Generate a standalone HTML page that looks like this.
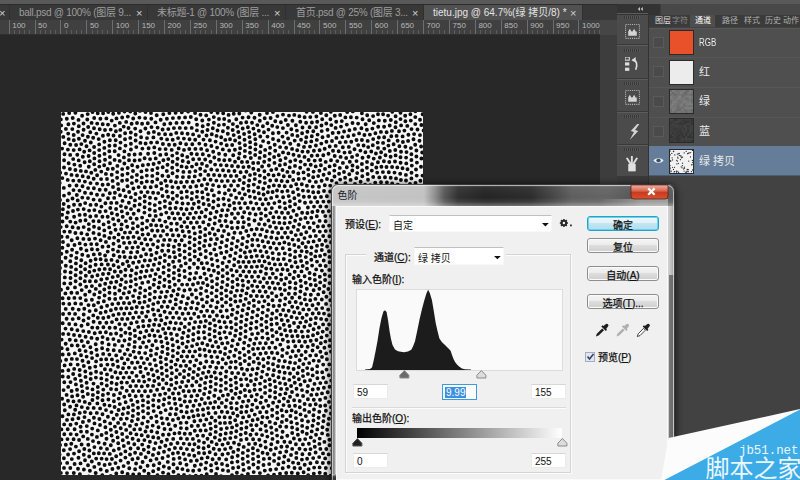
<!DOCTYPE html>
<html><head><meta charset="utf-8"><title>色阶</title>
<style>
*{margin:0;padding:0;box-sizing:border-box}
html,body{width:800px;height:480px;overflow:hidden;background:#282828}
body{position:relative;font-family:"Liberation Sans","Noto Sans CJK SC",sans-serif;font-size:11px;color:#ddd}
.a{position:absolute}
.t{position:absolute;white-space:nowrap;line-height:1}
/* top */
#topstrip{left:0;top:0;width:800px;height:4px;background:#595959}
#tabbar{left:0;top:4px;width:617px;height:17px;background:#383838;border-top:1px solid #2b2b2b}
.tab{position:absolute;top:5px;height:16px;border-right:1px solid #303030;color:#9e9e9e;font-size:10px;letter-spacing:-0.27px}
.tab .t{top:3px}
.tab.act{background:#515151;color:#e4e4e4;letter-spacing:0}
.x{position:absolute;top:2.5px;font-size:11px;color:#d0d0d0;line-height:1;letter-spacing:0}
#ruler{left:0;top:20px;width:600px;height:15px;background:#404040;border-bottom:1px solid #303030}
#ruler .lb{position:absolute;top:2px;font-size:8px;color:#b8b8b8;line-height:1}
#ruler .tk{position:absolute;top:0;width:1px;height:14px;background:#6e6e6e}
#vscroll{left:600px;top:21px;width:17px;height:459px;background:#3d3d3d}
/* panels */
#strip{left:617px;top:4px;width:31px;height:476px;background:#4b4b4b}
#striphead{left:617px;top:4px;width:183px;height:11px;background:linear-gradient(90deg,#333 0,#333 43px,#484848 44px)}
.ib{position:absolute;left:617px;width:31px;height:33px;border-bottom:1px solid #3a3a3a;border-top:1px solid #5c5c5c}
.grip{position:absolute;left:7px;top:1px;width:16px;height:3px;background:repeating-linear-gradient(90deg,#383838 0 1px,#565656 1px 2px)}
#panel{left:648px;top:14px;width:152px;height:466px;background:#424242;border-left:1px solid #333}
#ptabs{left:649px;top:15px;width:151px;height:12px;background:#3b3b3b;overflow:hidden}
.row{position:absolute;left:649px;width:151px;height:30px;background:#4f4f4f;border-bottom:1px solid #3c3c3c;box-shadow:inset 0 1px 0 #575757}
.row.sel{background:#667d99;box-shadow:none;border-bottom-color:#4c5e75}
.eye{position:absolute;left:4px;top:9px;width:11px;height:11px;border:1px solid #5a5a5a;background:#4a4a4a}
.th{position:absolute;left:20px;top:3px;width:25px;height:25px;border:1px solid #2a2a2a}
.row .t{left:50px;top:9.4px;font-size:11px;color:#e8e8e8}
/* dialog */
#dlg{left:331px;top:184px;width:344px;height:300px}
#cli{left:336px;top:206px;width:332px;height:274px;background:#f0f0f0;border:1px solid #fafafa;color:#000}
.dt{position:absolute;white-space:nowrap;line-height:1;font-size:10px;color:#111;-webkit-text-stroke:0.25px #111}
.inp{position:absolute;background:#fff;border:1px solid #ebebeb;border-top-color:#d6d6d6;height:16px;font-size:10px;color:#111;padding:3px 0 0 3px;line-height:1}
.btn{position:absolute;left:587px;width:72px;height:15px;border:1px solid #8e8e8e;border-radius:3px;background:linear-gradient(#f4f4f4 0,#ececec 45%,#dddddd 50%,#cfcfcf 100%);box-shadow:inset 0 0 0 1px #fbfbfb;text-align:center;font-size:10px;color:#111;line-height:13px;padding-top:2px;-webkit-text-stroke:0.25px #111}
.btn.def{border-color:#2f9fc4;box-shadow:inset 0 0 0 1px #5fd6f3;background:linear-gradient(#eef8fc 0,#def1f9 45%,#c4e5f3 50%,#b4dcee 100%)}
u{text-decoration:underline}
</style></head><body>
<div class="a" id="topstrip"></div>
<div class="a" id="tabbar"></div>
<div class="tab" style="left:0;width:10px"><span class="x" style="left:-1px">×</span></div>
<div class="tab" style="left:10px;width:138px"><span class="t" style="left:9px">ball.psd @ 100% (图层 9...</span><span class="x" style="left:126px">×</span></div>
<div class="tab" style="left:148px;width:138px"><span class="t" style="left:9px">未标题-1 @ 100% (图层 ...</span><span class="x" style="left:126px">×</span></div>
<div class="tab" style="left:286px;width:138px"><span class="t" style="left:10px">首页.psd @ 25% (图层 3...</span><span class="x" style="left:126px">×</span></div>
<div class="tab act" style="left:424px;width:159px"><span class="t" style="left:9px">tietu.jpg @ 64.7%(绿 拷贝/8) *</span><span class="x" style="left:146px">×</span></div>
<div class="a" id="ruler"><i class="tk" style="left:8.6px"></i><span class="lb" style="left:12.2px">100</span><i class="tk" style="left:13.8px;top:10px;height:4px;background:#5c5c5c"></i><i class="tk" style="left:19.0px;top:10px;height:4px;background:#5c5c5c"></i><i class="tk" style="left:24.1px;top:10px;height:4px;background:#5c5c5c"></i><i class="tk" style="left:29.3px;top:10px;height:4px;background:#5c5c5c"></i><i class="tk" style="left:34.5px"></i><span class="lb" style="left:38.1px">50</span><i class="tk" style="left:39.7px;top:10px;height:4px;background:#5c5c5c"></i><i class="tk" style="left:44.9px;top:10px;height:4px;background:#5c5c5c"></i><i class="tk" style="left:50.0px;top:10px;height:4px;background:#5c5c5c"></i><i class="tk" style="left:55.2px;top:10px;height:4px;background:#5c5c5c"></i><i class="tk" style="left:60.4px"></i><span class="lb" style="left:64.0px">0</span><i class="tk" style="left:65.6px;top:10px;height:4px;background:#5c5c5c"></i><i class="tk" style="left:70.8px;top:10px;height:4px;background:#5c5c5c"></i><i class="tk" style="left:75.9px;top:10px;height:4px;background:#5c5c5c"></i><i class="tk" style="left:81.1px;top:10px;height:4px;background:#5c5c5c"></i><i class="tk" style="left:86.3px"></i><span class="lb" style="left:89.9px">50</span><i class="tk" style="left:91.5px;top:10px;height:4px;background:#5c5c5c"></i><i class="tk" style="left:96.7px;top:10px;height:4px;background:#5c5c5c"></i><i class="tk" style="left:101.8px;top:10px;height:4px;background:#5c5c5c"></i><i class="tk" style="left:107.0px;top:10px;height:4px;background:#5c5c5c"></i><i class="tk" style="left:112.2px"></i><span class="lb" style="left:115.8px">100</span><i class="tk" style="left:117.4px;top:10px;height:4px;background:#5c5c5c"></i><i class="tk" style="left:122.6px;top:10px;height:4px;background:#5c5c5c"></i><i class="tk" style="left:127.7px;top:10px;height:4px;background:#5c5c5c"></i><i class="tk" style="left:132.9px;top:10px;height:4px;background:#5c5c5c"></i><i class="tk" style="left:138.1px"></i><span class="lb" style="left:141.7px">150</span><i class="tk" style="left:143.3px;top:10px;height:4px;background:#5c5c5c"></i><i class="tk" style="left:148.5px;top:10px;height:4px;background:#5c5c5c"></i><i class="tk" style="left:153.6px;top:10px;height:4px;background:#5c5c5c"></i><i class="tk" style="left:158.8px;top:10px;height:4px;background:#5c5c5c"></i><i class="tk" style="left:164.0px"></i><span class="lb" style="left:167.6px">200</span><i class="tk" style="left:169.2px;top:10px;height:4px;background:#5c5c5c"></i><i class="tk" style="left:174.4px;top:10px;height:4px;background:#5c5c5c"></i><i class="tk" style="left:179.5px;top:10px;height:4px;background:#5c5c5c"></i><i class="tk" style="left:184.7px;top:10px;height:4px;background:#5c5c5c"></i><i class="tk" style="left:189.9px"></i><span class="lb" style="left:193.5px">250</span><i class="tk" style="left:195.1px;top:10px;height:4px;background:#5c5c5c"></i><i class="tk" style="left:200.3px;top:10px;height:4px;background:#5c5c5c"></i><i class="tk" style="left:205.4px;top:10px;height:4px;background:#5c5c5c"></i><i class="tk" style="left:210.6px;top:10px;height:4px;background:#5c5c5c"></i><i class="tk" style="left:215.8px"></i><span class="lb" style="left:219.4px">300</span><i class="tk" style="left:221.0px;top:10px;height:4px;background:#5c5c5c"></i><i class="tk" style="left:226.2px;top:10px;height:4px;background:#5c5c5c"></i><i class="tk" style="left:231.3px;top:10px;height:4px;background:#5c5c5c"></i><i class="tk" style="left:236.5px;top:10px;height:4px;background:#5c5c5c"></i><i class="tk" style="left:241.7px"></i><span class="lb" style="left:245.3px">350</span><i class="tk" style="left:246.9px;top:10px;height:4px;background:#5c5c5c"></i><i class="tk" style="left:252.1px;top:10px;height:4px;background:#5c5c5c"></i><i class="tk" style="left:257.2px;top:10px;height:4px;background:#5c5c5c"></i><i class="tk" style="left:262.4px;top:10px;height:4px;background:#5c5c5c"></i><i class="tk" style="left:267.6px"></i><span class="lb" style="left:271.2px">400</span><i class="tk" style="left:272.8px;top:10px;height:4px;background:#5c5c5c"></i><i class="tk" style="left:278.0px;top:10px;height:4px;background:#5c5c5c"></i><i class="tk" style="left:283.1px;top:10px;height:4px;background:#5c5c5c"></i><i class="tk" style="left:288.3px;top:10px;height:4px;background:#5c5c5c"></i><i class="tk" style="left:293.5px"></i><span class="lb" style="left:297.1px">450</span><i class="tk" style="left:298.7px;top:10px;height:4px;background:#5c5c5c"></i><i class="tk" style="left:303.9px;top:10px;height:4px;background:#5c5c5c"></i><i class="tk" style="left:309.0px;top:10px;height:4px;background:#5c5c5c"></i><i class="tk" style="left:314.2px;top:10px;height:4px;background:#5c5c5c"></i><i class="tk" style="left:319.4px"></i><span class="lb" style="left:323.0px">500</span><i class="tk" style="left:324.6px;top:10px;height:4px;background:#5c5c5c"></i><i class="tk" style="left:329.8px;top:10px;height:4px;background:#5c5c5c"></i><i class="tk" style="left:334.9px;top:10px;height:4px;background:#5c5c5c"></i><i class="tk" style="left:340.1px;top:10px;height:4px;background:#5c5c5c"></i><i class="tk" style="left:345.3px"></i><span class="lb" style="left:348.9px">550</span><i class="tk" style="left:350.5px;top:10px;height:4px;background:#5c5c5c"></i><i class="tk" style="left:355.7px;top:10px;height:4px;background:#5c5c5c"></i><i class="tk" style="left:360.8px;top:10px;height:4px;background:#5c5c5c"></i><i class="tk" style="left:366.0px;top:10px;height:4px;background:#5c5c5c"></i><i class="tk" style="left:371.2px"></i><span class="lb" style="left:374.8px">600</span><i class="tk" style="left:376.4px;top:10px;height:4px;background:#5c5c5c"></i><i class="tk" style="left:381.6px;top:10px;height:4px;background:#5c5c5c"></i><i class="tk" style="left:386.7px;top:10px;height:4px;background:#5c5c5c"></i><i class="tk" style="left:391.9px;top:10px;height:4px;background:#5c5c5c"></i><i class="tk" style="left:397.1px"></i><span class="lb" style="left:400.7px">650</span><i class="tk" style="left:402.3px;top:10px;height:4px;background:#5c5c5c"></i><i class="tk" style="left:407.5px;top:10px;height:4px;background:#5c5c5c"></i><i class="tk" style="left:412.6px;top:10px;height:4px;background:#5c5c5c"></i><i class="tk" style="left:417.8px;top:10px;height:4px;background:#5c5c5c"></i><i class="tk" style="left:423.0px"></i><span class="lb" style="left:426.6px">700</span><i class="tk" style="left:428.2px;top:10px;height:4px;background:#5c5c5c"></i><i class="tk" style="left:433.4px;top:10px;height:4px;background:#5c5c5c"></i><i class="tk" style="left:438.5px;top:10px;height:4px;background:#5c5c5c"></i><i class="tk" style="left:443.7px;top:10px;height:4px;background:#5c5c5c"></i><i class="tk" style="left:448.9px"></i><span class="lb" style="left:452.5px">750</span><i class="tk" style="left:454.1px;top:10px;height:4px;background:#5c5c5c"></i><i class="tk" style="left:459.3px;top:10px;height:4px;background:#5c5c5c"></i><i class="tk" style="left:464.4px;top:10px;height:4px;background:#5c5c5c"></i><i class="tk" style="left:469.6px;top:10px;height:4px;background:#5c5c5c"></i><i class="tk" style="left:474.8px"></i><span class="lb" style="left:478.4px">800</span><i class="tk" style="left:480.0px;top:10px;height:4px;background:#5c5c5c"></i><i class="tk" style="left:485.2px;top:10px;height:4px;background:#5c5c5c"></i><i class="tk" style="left:490.3px;top:10px;height:4px;background:#5c5c5c"></i><i class="tk" style="left:495.5px;top:10px;height:4px;background:#5c5c5c"></i><i class="tk" style="left:500.7px"></i><span class="lb" style="left:504.3px">850</span><i class="tk" style="left:505.9px;top:10px;height:4px;background:#5c5c5c"></i><i class="tk" style="left:511.1px;top:10px;height:4px;background:#5c5c5c"></i><i class="tk" style="left:516.2px;top:10px;height:4px;background:#5c5c5c"></i><i class="tk" style="left:521.4px;top:10px;height:4px;background:#5c5c5c"></i><i class="tk" style="left:526.6px"></i><span class="lb" style="left:530.2px">900</span><i class="tk" style="left:531.8px;top:10px;height:4px;background:#5c5c5c"></i><i class="tk" style="left:537.0px;top:10px;height:4px;background:#5c5c5c"></i><i class="tk" style="left:542.1px;top:10px;height:4px;background:#5c5c5c"></i><i class="tk" style="left:547.3px;top:10px;height:4px;background:#5c5c5c"></i><i class="tk" style="left:552.5px"></i><span class="lb" style="left:556.1px">950</span><i class="tk" style="left:557.7px;top:10px;height:4px;background:#5c5c5c"></i><i class="tk" style="left:562.9px;top:10px;height:4px;background:#5c5c5c"></i><i class="tk" style="left:568.0px;top:10px;height:4px;background:#5c5c5c"></i><i class="tk" style="left:573.2px;top:10px;height:4px;background:#5c5c5c"></i><i class="tk" style="left:578.4px"></i><span class="lb" style="left:582.0px">1000</span><i class="tk" style="left:583.6px;top:10px;height:4px;background:#5c5c5c"></i><i class="tk" style="left:588.8px;top:10px;height:4px;background:#5c5c5c"></i><i class="tk" style="left:593.9px;top:10px;height:4px;background:#5c5c5c"></i><i class="tk" style="left:599.1px;top:10px;height:4px;background:#5c5c5c"></i></div>
<div class="a" id="vscroll"></div>
<div class="a" style="left:600px;top:20px;width:17px;height:15px;background:#464646"></div>

<!-- document canvas -->
<svg class="a" style="left:61px;top:112px;overflow:hidden" width="362" height="363" viewBox="0 0 362 363"><rect width="362" height="363" fill="#f6f6f6"/><filter id="bl" x="0" y="0" width="362" height="363" filterUnits="userSpaceOnUse"><feGaussianBlur stdDeviation="0.5"/></filter><g filter="url(#bl)"><path d="M116.0 52.5h0M120.6 54.4h0M122.4 59.9h0M116.6 58.6h0M111.6 49.8h0M106.5 52.8h0M116.5 46.7h0M111.5 61.3h0M125.6 55.2h0M107.3 47.1h0M128.6 59.9h0M116.0 64.7h0M111.3 43.6h0M121.9 65.1h0M105.2 42.2h0M134.4 59.1h0M107.3 64.3h0M114.9 70.3h0M104.4 68.7h0M105.8 59.0h0M102.4 48.2h0M121.2 43.2h0M121.7 49.0h0M101.4 63.8h0M127.4 50.2h0M101.7 55.3h0M99.3 42.9h0M126.3 44.9h0M110.7 37.9h0M104.6 37.1h0M117.2 75.7h0M108.0 32.7h0M98.1 50.6h0M116.0 41.1h0M109.9 69.3h0M128.0 65.0h0M111.2 55.8h0M93.3 41.0h0M131.0 54.6h0M120.1 70.2h0M130.4 41.7h0M123.0 37.9h0M120.3 80.2h0M139.4 62.8h0M117.7 36.4h0M119.4 31.2h0M133.7 64.4h0M125.1 32.2h0M113.7 32.8h0M132.2 47.3h0M128.3 37.0h0M138.2 47.1h0M131.3 32.3h0M111.4 75.1h0M122.9 26.6h0M98.7 37.1h0M96.3 67.3h0M128.5 27.3h0M125.9 69.8h0M139.2 56.8h0M137.7 68.6h0M101.9 32.0h0M132.1 22.4h0M106.1 27.4h0M111.7 27.7h0M117.1 26.1h0M105.8 73.9h0M96.5 61.4h0M135.5 52.2h0M105.7 79.5h0M141.8 42.3h0M135.9 18.4h0M134.4 36.9h0M131.8 69.8h0M134.2 27.8h0M96.1 30.4h0M111.5 80.6h0M138.3 31.6h0M142.5 27.6h0M129.4 75.0h0M93.3 35.4h0M136.0 12.7h0M91.3 58.0h0M138.0 24.1h0M140.8 73.2h0M100.1 71.3h0M144.5 32.7h0M96.5 56.1h0M109.9 22.4h0M135.3 74.3h0M104.1 22.2h0M144.2 47.5h0M141.3 19.8h0M141.7 14.3h0M147.1 12.6h0M116.1 83.8h0M144.1 59.1h0M145.5 23.5h0M136.2 79.6h0M87.6 36.2h0M121.0 21.2h0M92.6 52.0h0M141.3 8.5h0M100.6 76.9h0M107.1 84.7h0M147.9 7.6h0M126.6 21.7h0M141.0 51.8h0M103.9 89.1h0M135.9 42.2h0M145.9 53.9h0M94.7 46.4h0M84.6 31.5h0M148.9 28.2h0M123.2 74.8h0M150.8 22.2h0M140.2 36.9h0M151.8 16.2h0M135.8 84.9h0M107.3 17.1h0M130.7 15.9h0M143.4 67.2h0M97.2 81.1h0M124.7 16.1h0M95.3 74.2h0M146.5 18.0h0M149.5 49.7h0M89.7 75.3h0M147.9 43.6h0M146.1 38.2h0M156.5 18.5h0M118.8 15.9h0M150.4 34.0h0M115.3 20.9h0M89.1 47.1h0M86.6 80.1h0M157.8 13.1h0M92.4 25.4h0M97.9 21.9h0M85.7 58.1h0M101.6 17.5h0M112.9 16.1h0M127.7 10.6h0M141.2 80.3h0M87.1 41.7h0M80.4 59.4h0M87.2 52.6h0M155.5 23.9h0M92.9 19.9h0M163.0 12.6h0M152.9 10.7h0M139.5 2.8h0M150.3 57.5h0M160.2 25.3h0M92.1 80.7h0M158.0 7.0h0M125.8 79.4h0M103.3 12.3h0M135.2 7.2h0M100.3 26.6h0M152.2 39.7h0M109.3 11.5h0M149.6 67.8h0M124.1 5.4h0M121.6 10.8h0M156.1 35.6h0M153.3 45.5h0M90.1 30.6h0M111.8 86.7h0M125.9 84.9h0M115.8 90.4h0M161.9 19.3h0M109.1 91.2h0M94.7 86.6h0M75.9 62.9h0M141.7 85.8h0M114.6 96.0h0M168.2 8.9h0M154.6 29.6h0M152.8 5.1h0M130.7 87.0h0M166.8 21.8h0M132.9 91.8h0M89.0 85.8h0M120.8 86.1h0M147.4 62.9h0M96.6 15.6h0M153.0 63.0h0M161.8 37.4h0M131.0 81.0h0M131.2 96.5h0M80.2 80.1h0M115.5 10.9h0M83.6 46.3h0M127.1 91.6h0M88.7 91.6h0M81.8 53.3h0M164.3 27.9h0M93.8 93.1h0M134.1 1.1h0M88.7 97.5h0M83.8 75.2h0M160.1 31.6h0M158.0 47.7h0M79.4 41.9h0M129.8 5.0h0M147.0 87.7h0M76.5 54.8h0M154.1 52.6h0M78.7 48.1h0M171.9 12.1h0M111.9 6.1h0M79.4 30.9h0M165.7 33.3h0M166.9 15.8h0M163.2 7.0h0M98.8 90.6h0M134.9 100.6h0M86.0 26.1h0M156.6 0.7h0M158.0 41.7h0M83.7 84.3h0M146.9 82.4h0M152.5 89.5h0M103.9 94.7h0M94.0 98.9h0M73.6 48.5h0M146.4 72.1h0M125.6 97.2h0M78.8 86.1h0M172.7 23.1h0M162.2 1.3h0M164.3 42.7h0M152.9 83.4h0M145.2 77.0h0M77.6 75.1h0M71.1 53.3h0M73.6 42.5h0M109.1 96.5h0M169.0 27.3h0M142.6 92.0h0M81.4 36.6h0M150.3 -0.0h0M75.3 35.1h0M121.5 91.5h0M145.2 3.4h0M174.1 28.5h0M98.9 96.6h0M148.0 93.0h0M100.2 102.4h0M91.2 69.8h0M66.7 56.0h0M83.7 89.5h0M63.4 51.5h0M120.2 96.8h0M137.8 95.5h0M114.6 0.7h0M118.1 5.7h0M75.6 68.8h0M152.1 95.8h0M90.5 15.1h0M99.7 7.7h0M156.2 58.1h0M157.3 87.2h0M84.4 16.5h0M94.7 103.9h0M74.5 82.0h0M127.1 -0.5h0M167.6 2.9h0M69.9 31.7h0M74.6 28.5h0M85.8 69.4h0M88.7 103.4h0M69.9 85.4h0M117.0 101.5h0M178.4 25.3h0M74.7 22.8h0M83.6 95.2h0M105.9 6.8h0M120.8 0.2h0M86.8 11.2h0M92.3 108.3h0M162.5 86.8h0M159.8 53.1h0M163.3 48.2h0M155.4 68.6h0M72.0 59.0h0M81.1 11.7h0M152.1 73.1h0M158.5 63.5h0M74.0 88.4h0M73.5 93.7h0M68.0 48.3h0M94.5 10.4h0M168.2 38.5h0M69.9 37.5h0M95.7 3.3h0M165.6 53.4h0M137.7 89.8h0M108.4 1.1h0M69.8 20.5h0M171.2 33.0h0M61.2 57.1h0M102.3 2.2h0M78.7 92.4h0M177.3 20.0h0M173.9 37.7h0M111.4 101.3h0M172.2 43.3h0M178.5 31.1h0M157.3 93.4h0M72.4 76.5h0M129.0 101.6h0M80.1 25.2h0M126.7 106.3h0M85.8 63.6h0M98.6 108.1h0M84.2 6.1h0M162.0 58.3h0M80.8 65.4h0M79.5 19.2h0M76.0 11.0h0M181.7 16.5h0M172.7 1.7h0M101.5 84.0h0M83.4 100.6h0M87.5 20.9h0M161.2 98.2h0M68.2 80.0h0M163.1 92.6h0M68.0 42.7h0M119.2 106.8h0M167.7 58.9h0M173.5 59.0h0M58.7 48.9h0M175.3 7.2h0M69.3 25.9h0M129.9 110.8h0M66.6 61.6h0M171.7 18.0h0M122.8 102.3h0M74.2 16.6h0M132.7 105.9h0M62.9 45.4h0M138.5 105.5h0M160.9 69.1h0M90.0 1.1h0M155.6 99.8h0M91.3 63.9h0M100.4 113.7h0M132.6 115.7h0M138.6 114.9h0M107.9 105.8h0M61.3 63.0h0M167.8 88.1h0M56.4 53.9h0M145.1 97.6h0M175.5 63.9h0M57.6 43.1h0M169.9 64.0h0M105.3 100.6h0M172.9 69.1h0M70.9 65.1h0M53.6 47.9h0M179.1 36.2h0M164.1 63.7h0M64.0 27.3h0M64.1 21.2h0M123.4 110.1h0M59.5 30.6h0M157.8 74.4h0M56.2 60.1h0M183.1 22.0h0M171.0 54.0h0M56.1 65.8h0M58.9 24.0h0M176.3 14.6h0M135.9 110.5h0M142.3 110.2h0M170.0 83.1h0M188.2 20.1h0M163.7 74.3h0M174.0 49.7h0M179.9 10.9h0M66.1 68.0h0M67.5 16.0h0M183.5 27.7h0M178.4 41.5h0M173.0 90.9h0M178.3 1.5h0M64.5 84.4h0M64.5 33.6h0M67.9 90.7h0M149.6 101.3h0M63.4 39.4h0M185.3 10.3h0M168.6 93.5h0M70.9 71.1h0M177.6 46.2h0M166.8 98.1h0M173.6 96.7h0M188.5 25.1h0M166.7 68.9h0M61.5 88.9h0M178.2 91.1h0M181.6 5.6h0M184.0 33.2h0M186.9 15.2h0M177.0 54.5h0M179.6 96.1h0M178.6 68.0h0M158.1 80.4h0M90.3 6.7h0M77.6 98.5h0M59.0 83.3h0M168.7 48.0h0M70.6 11.8h0M113.5 106.6h0M173.6 78.3h0M183.2 100.2h0M66.5 74.2h0M65.2 9.9h0M66.8 4.6h0M182.4 55.1h0M182.8 71.0h0M115.9 111.8h0M184.6 -1.4h0M51.8 56.7h0M72.2 6.5h0M120.4 114.4h0M62.6 78.2h0M183.9 38.9h0M189.2 35.4h0M181.5 105.3h0M80.6 70.8h0M170.9 101.8h0M62.7 14.6h0M178.4 81.1h0M150.9 78.2h0M58.9 36.4h0M189.1 30.2h0M58.8 10.9h0M167.8 78.1h0M177.0 73.6h0M186.8 95.9h0M59.3 17.9h0M179.6 60.2h0M180.9 50.0h0M175.1 85.8h0M126.2 115.0h0M187.5 5.2h0M50.7 62.8h0M81.1 105.6h0M49.0 51.3h0M190.3 0.5h0M53.9 80.7h0M53.7 39.3h0M86.2 108.7h0M54.7 28.2h0M104.3 109.6h0M61.2 5.5h0M57.9 0.8h0M182.1 76.7h0M188.8 101.5h0M191.0 10.8h0M69.3 -0.4h0M163.9 81.5h0M193.6 22.2h0M184.0 91.3h0M54.9 19.3h0M173.9 106.1h0M194.3 27.3h0M189.0 40.8h0M192.3 96.7h0M194.4 37.5h0M192.4 16.6h0M70.0 97.1h0M140.6 100.3h0M46.0 67.0h0M49.7 17.6h0M51.6 68.9h0M183.3 65.0h0M181.1 86.5h0M159.9 103.8h0M78.4 5.6h0M84.5 0.0h0M177.1 101.5h0M121.7 119.3h0M44.9 61.9h0M78.9 -1.1h0M185.4 59.7h0M65.0 95.5h0M110.2 111.6h0M189.0 63.1h0M48.9 45.0h0M55.7 90.9h0M170.1 73.5h0M53.9 13.6h0M196.3 13.1h0M50.2 90.9h0M123.6 124.1h0M59.9 94.1h0M55.1 97.0h0M199.3 24.5h0M102.1 118.9h0M128.0 119.8h0M60.8 99.4h0M95.2 113.4h0M44.0 47.7h0M105.9 115.1h0M40.3 59.6h0M187.8 54.8h0M57.0 71.9h0M50.7 8.6h0M52.5 23.5h0M96.6 118.8h0M187.7 107.0h0M193.5 5.7h0M66.4 101.5h0M183.8 44.6h0M47.2 22.8h0M165.5 103.5h0M43.2 53.2h0M53.2 85.9h0M61.7 104.8h0M61.1 68.7h0M154.1 105.4h0M183.9 82.4h0M38.5 49.2h0M63.5 -0.4h0M46.7 57.0h0M115.7 117.8h0M144.3 104.5h0M93.8 123.9h0M74.3 1.5h0M194.6 32.2h0M90.0 113.0h0M189.8 46.0h0M199.8 34.2h0M164.5 109.0h0M139.4 119.9h0M54.0 33.5h0M81.3 111.4h0M189.8 90.5h0M148.9 107.4h0M47.0 86.3h0M194.2 43.0h0M41.9 23.7h0M144.3 117.0h0M198.6 45.9h0M203.7 44.0h0M133.8 121.4h0M120.7 128.3h0M48.4 33.7h0M117.5 123.5h0M48.9 28.2h0M37.7 27.1h0M187.5 73.8h0M75.7 106.7h0M44.0 18.0h0M133.7 127.3h0M147.7 112.7h0M188.0 112.8h0M194.6 102.5h0M43.5 41.9h0M52.0 75.0h0M48.8 81.2h0M197.8 18.7h0M199.2 40.2h0M57.5 77.2h0M44.4 91.2h0M198.7 2.7h0M106.1 122.6h0M48.3 39.3h0M91.1 118.5h0M187.7 78.7h0M47.1 72.4h0M33.2 52.3h0M128.8 125.1h0M42.0 83.1h0M85.7 115.6h0M198.8 8.7h0M144.1 123.2h0M202.1 29.1h0M158.6 108.9h0M110.2 118.0h0M192.8 79.5h0M72.7 101.7h0M81.2 117.5h0M69.5 106.3h0M43.4 29.8h0M193.5 108.5h0M182.8 110.2h0M41.7 12.2h0M193.8 61.9h0M203.0 20.2h0M55.5 6.4h0M76.8 114.2h0M52.2 1.8h0M87.2 122.2h0M71.9 116.4h0M40.4 94.6h0M204.2 37.9h0M193.8 67.1h0M153.7 111.5h0M166.1 114.4h0M177.1 110.2h0M207.5 17.6h0M186.3 49.9h0M38.3 54.6h0M190.5 117.6h0M151.7 116.8h0M76.1 120.4h0M43.3 35.9h0M71.9 111.1h0M208.4 47.7h0M72.5 124.9h0M201.9 14.3h0M111.9 123.3h0M57.5 108.5h0M81.6 122.6h0M114.4 128.8h0M52.1 106.9h0M41.6 72.8h0M38.9 88.3h0M99.7 123.9h0M192.3 56.7h0M108.8 127.9h0M160.4 113.8h0M40.1 67.1h0M33.4 46.4h0M36.0 71.6h0M69.1 120.4h0M112.9 134.7h0M66.2 114.8h0M38.4 43.7h0M148.6 121.2h0M38.9 99.8h0M44.6 99.1h0M206.5 24.6h0M38.2 38.1h0M60.6 112.4h0M118.2 132.8h0M185.3 119.0h0M103.2 127.9h0M188.2 68.5h0M192.8 72.6h0M170.4 110.3h0M182.0 115.2h0M38.2 32.4h0M188.9 84.6h0M107.5 133.2h0M78.0 126.3h0M203.7 6.2h0M38.7 77.8h0M208.7 41.6h0M212.0 27.0h0M63.9 120.6h0M198.7 69.7h0M97.1 129.1h0M193.9 85.8h0M32.7 66.8h0M74.2 130.3h0M206.4 11.3h0M67.0 125.8h0M197.5 58.0h0M84.2 127.3h0M28.8 49.2h0M45.4 6.4h0M138.5 130.7h0M211.2 13.7h0M197.2 75.4h0M157.3 118.4h0M198.9 63.6h0M33.2 41.0h0M33.1 35.0h0M203.9 71.1h0M32.9 76.3h0M192.2 51.0h0M89.8 127.6h0M203.6 65.8h0M63.0 130.9h0M101.9 133.1h0M44.7 77.8h0M92.1 132.5h0M209.1 35.8h0M86.3 132.7h0M193.5 122.5h0M207.8 53.5h0M203.4 59.3h0M133.5 133.3h0M153.8 122.5h0M29.8 30.5h0M163.0 119.0h0M36.1 63.2h0M36.0 82.8h0M199.9 107.0h0M176.5 115.7h0M82.5 137.2h0M96.6 135.2h0M138.9 125.3h0M35.2 92.7h0M128.5 130.5h0M101.1 138.7h0M203.2 49.8h0M179.5 120.9h0M171.0 116.0h0M39.4 6.7h0M201.1 54.5h0M161.2 124.2h0M123.8 133.4h0M65.7 135.9h0M53.4 112.6h0M89.3 137.7h0M38.7 17.3h0M214.2 38.8h0M118.2 137.8h0M29.5 71.1h0M197.2 50.9h0M56.2 102.8h0M68.6 130.8h0M33.0 16.3h0M210.3 58.1h0M144.2 128.7h0M80.5 131.4h0M48.2 115.4h0M107.4 138.7h0M90.4 143.0h0M207.9 74.7h0M211.9 21.3h0M195.7 117.0h0M206.9 80.3h0M95.5 140.8h0M34.3 57.9h0M213.1 45.0h0M195.4 91.6h0M36.2 11.6h0M187.4 123.8h0M173.5 120.8h0M148.7 133.3h0M57.6 122.4h0M47.3 0.1h0M30.6 10.9h0M47.0 12.6h0M207.5 30.6h0M77.0 135.1h0M30.3 60.7h0M209.6 6.0h0M27.1 76.1h0M198.0 112.1h0M46.7 104.7h0M27.3 65.2h0M206.0 1.0h0M212.8 73.4h0M50.8 101.2h0M211.9 0.1h0M42.6 112.4h0M33.4 98.1h0M71.5 135.6h0M149.9 127.3h0M60.2 117.2h0M172.2 125.9h0M138.5 136.7h0M42.1 1.2h0M103.8 143.1h0M216.3 15.1h0M61.8 125.6h0M27.8 54.8h0M25.5 34.2h0M213.7 32.7h0M41.4 104.8h0M213.5 50.9h0M222.0 2.6h0M49.7 120.7h0M198.0 96.8h0M76.3 140.0h0M47.6 110.1h0M25.0 59.4h0M21.5 74.3h0M94.4 147.0h0M170.9 131.4h0M217.5 28.5h0M33.2 6.0h0M202.3 76.7h0M181.8 126.0h0M32.2 25.8h0M215.3 68.2h0M36.7 1.3h0M74.4 145.2h0M170.4 137.2h0M32.6 87.6h0M35.4 21.6h0M207.5 62.6h0M54.5 117.8h0M123.6 139.4h0M23.6 50.3h0M143.1 133.9h0M19.8 58.9h0M112.9 140.3h0M144.8 139.0h0M217.6 20.7h0M156.0 127.0h0M118.9 143.0h0M186.3 129.6h0M199.3 122.9h0M43.3 118.4h0M167.6 122.3h0M21.7 64.2h0M70.0 140.4h0M215.3 57.0h0M218.8 53.2h0M53.2 125.6h0M199.1 87.1h0M219.3 48.2h0M16.0 63.5h0M201.6 92.3h0M221.5 58.0h0M204.8 87.3h0M128.7 136.4h0M203.7 112.5h0M58.4 134.4h0M118.3 148.9h0M27.2 15.0h0M23.9 69.6h0M27.6 44.0h0M214.3 9.2h0M133.7 139.2h0M191.3 127.7h0M37.9 109.3h0M57.0 139.4h0M62.5 139.9h0M224.6 46.1h0M49.3 96.0h0M209.2 68.5h0M166.2 128.0h0M160.7 130.2h0M48.3 126.0h0M181.1 132.2h0M222.0 40.4h0M85.1 142.3h0M154.4 131.9h0M197.8 81.2h0M22.5 11.5h0M211.6 80.0h0M35.1 103.9h0M204.6 97.3h0M217.7 62.4h0M29.3 20.3h0M165.3 134.0h0M26.3 7.5h0M38.1 116.2h0M210.2 85.9h0M219.1 35.1h0M201.0 117.4h0M229.3 49.5h0M218.2 73.7h0M19.2 53.8h0M32.5 120.9h0M31.5 0.0h0M30.2 81.4h0M224.1 52.2h0M22.6 17.8h0M21.8 44.8h0M80.0 144.2h0M227.4 41.4h0M207.5 108.5h0M27.0 86.1h0M217.8 43.2h0M200.1 101.4h0M205.9 119.2h0M204.8 103.7h0M64.9 109.1h0M139.6 142.2h0M209.1 114.5h0M20.3 32.1h0M232.5 42.8h0M17.7 48.4h0M207.5 91.8h0M26.7 2.1h0M165.5 139.8h0M220.7 69.0h0M221.9 16.1h0M12.2 47.1h0M222.8 64.2h0M52.5 131.7h0M133.8 144.6h0M169.2 143.7h0M213.0 110.4h0M225.2 35.8h0M211.4 120.1h0M210.3 125.5h0M191.3 133.3h0M18.2 68.8h0M69.3 145.4h0M179.6 138.1h0M17.9 26.8h0M128.5 142.2h0M215.0 115.7h0M221.5 24.6h0M33.0 114.8h0M221.1 79.6h0M216.4 4.1h0M215.9 84.4h0M26.9 24.7h0M176.7 128.9h0M108.6 144.9h0M185.7 135.2h0M112.1 149.7h0M15.1 33.0h0M57.4 128.8h0M14.4 58.0h0M218.4 110.9h0M23.2 39.7h0M13.4 52.6h0M213.4 91.1h0M175.6 134.7h0M217.2 121.0h0M183.8 140.5h0M99.2 145.4h0M27.8 112.1h0M159.2 135.6h0M38.1 122.2h0M223.0 30.5h0M72.2 150.7h0M89.0 148.4h0M223.7 74.2h0M66.3 149.5h0M8.9 57.0h0M63.7 145.0h0M3.0 55.5h0M220.7 116.4h0M123.7 145.7h0M28.6 38.4h0M202.6 82.5h0M83.7 148.5h0M174.6 141.1h0M124.7 151.4h0M21.6 23.1h0M120.0 153.9h0M103.8 149.0h0M227.1 26.5h0M153.3 137.4h0M43.4 123.9h0M216.0 78.5h0M21.1 3.7h0M32.4 109.1h0M231.1 36.9h0M9.2 42.9h0M212.6 63.4h0M52.7 143.3h0M226.4 59.9h0M7.7 51.3h0M226.4 69.4h0M163.5 145.7h0M212.4 105.2h0M14.4 0.8h0M44.9 129.9h0M24.0 80.7h0M226.9 13.0h0M210.8 96.1h0M129.1 147.9h0M225.6 20.6h0M234.0 53.9h0M144.7 145.2h0M226.5 78.9h0M58.6 144.7h0M17.5 7.9h0M233.3 2.9h0M189.1 139.5h0M234.3 48.1h0M29.3 104.5h0M194.1 138.4h0M77.9 149.8h0M17.8 14.2h0M217.9 105.4h0M137.5 147.8h0M173.4 147.1h0M98.4 151.3h0M27.9 117.5h0M229.3 31.7h0M102.7 155.1h0M5.0 61.6h0M215.3 99.9h0M102.5 160.8h0M24.5 108.3h0M219.9 10.3h0M24.2 91.1h0M227.7 84.1h0M47.4 134.4h0M15.5 73.5h0M179.3 144.4h0M173.1 153.3h0M12.5 78.1h0M52.0 137.6h0M146.1 151.1h0M209.3 101.1h0M24.0 102.7h0M238.4 4.3h0M18.6 37.4h0M8.6 73.6h0M204.8 124.7h0M12.9 11.6h0M160.2 141.0h0M236.2 38.2h0M155.2 143.0h0M67.8 154.0h0M92.9 152.8h0M196.4 127.9h0M16.3 42.7h0M10.5 62.9h0M18.5 78.6h0M28.1 98.6h0M228.7 55.4h0M230.3 17.2h0M87.1 153.6h0M231.2 22.9h0M150.6 147.1h0M75.8 155.4h0M231.4 8.7h0M223.5 111.3h0M1.3 66.1h0M241.4 39.6h0M12.3 68.6h0M195.8 143.9h0M97.2 157.2h0M21.3 85.6h0M177.5 149.9h0M199.6 139.1h0M215.7 126.5h0M246.9 39.8h0M239.3 9.8h0M249.0 34.6h0M12.7 38.1h0M228.0 3.6h0M91.0 158.1h0M185.1 145.2h0M234.9 13.3h0M222.1 85.2h0M151.4 153.0h0M12.8 28.3h0M26.2 122.4h0M197.4 133.6h0M218.7 95.1h0M114.1 145.2h0M39.6 128.3h0M107.7 163.7h0M218.4 89.4h0M230.0 74.2h0M156.3 148.6h0M107.9 158.1h0M22.7 115.1h0M236.5 23.9h0M232.3 60.0h0M140.7 151.3h0M161.6 151.0h0M81.6 154.2h0M207.2 130.3h0M170.3 157.9h0M250.7 43.7h0M241.1 21.2h0M3.5 42.2h0M9.3 32.8h0M168.1 149.6h0M20.4 121.2h0M165.9 154.7h0M94.6 162.1h0M161.7 157.9h0M17.0 19.7h0M221.0 125.4h0M223.7 91.1h0M133.0 151.8h0M229.9 105.3h0M61.8 152.0h0M16.4 126.2h0M179.1 154.9h0M175.7 159.2h0M252.9 38.7h0M128.6 155.7h0M8.1 81.5h0M243.0 34.9h0M19.3 108.7h0M244.8 30.3h0M13.1 104.8h0M107.8 152.7h0M85.5 159.0h0M64.5 157.8h0M237.5 32.9h0M250.3 29.4h0M12.0 99.0h0M17.3 115.9h0M84.1 164.6h0M-0.8 60.7h0M6.9 37.6h0M233.7 28.6h0M232.1 80.2h0M166.3 161.3h0M79.3 165.7h0M46.7 139.6h0M142.6 156.2h0M87.2 169.9h0M232.2 68.0h0M41.5 134.8h0M147.8 157.8h0M36.5 137.6h0M226.7 115.9h0M238.0 43.9h0M6.7 67.9h0M103.6 167.7h0M239.2 55.7h0M237.3 61.5h0M80.1 159.8h0M98.9 164.9h0M243.5 44.9h0M245.3 25.2h0M136.8 155.8h0M11.7 6.0h0M22.4 126.9h0M19.1 92.8h0M224.7 8.0h0M16.9 97.6h0M34.0 126.6h0M56.4 149.3h0M15.8 83.0h0M237.7 67.0h0M64.2 163.6h0M38.8 142.0h0M24.4 132.6h0M8.2 1.0h0M93.4 167.6h0M235.9 18.6h0M209.4 135.8h0M157.4 161.0h0M182.4 159.4h0M185.0 154.8h0M35.8 132.3h0M57.6 155.1h0M117.8 158.3h0M113.4 154.9h0M224.1 120.7h0M108.4 169.8h0M190.5 144.7h0M182.4 149.9h0M3.1 48.2h0M239.6 49.6h0M9.3 109.6h0M240.0 27.8h0M74.6 167.1h0M50.5 147.9h0M52.6 153.3h0M230.2 120.3h0M201.6 129.3h0M241.5 15.5h0M70.7 158.2h0M123.5 159.0h0M98.5 170.4h0M75.1 161.5h0M135.2 160.9h0M29.5 92.9h0M255.8 27.9h0M236.7 77.1h0M156.9 154.6h0M46.9 152.5h0M187.9 150.0h0M156.2 166.5h0M166.8 167.1h0M18.6 102.9h0M179.4 163.4h0M70.0 169.2h0M1.1 36.6h0M60.6 167.5h0M14.4 121.0h0M75.1 172.6h0M228.9 89.2h0M143.5 161.7h0M49.1 157.2h0M243.6 5.2h0M245.6 -0.3h0M79.3 175.9h0M193.2 149.6h0M161.7 164.3h0M205.5 140.0h0M13.0 92.8h0M12.7 23.0h0M112.8 166.5h0M235.2 72.3h0M11.6 115.2h0M221.0 100.7h0M203.4 134.7h0M45.0 148.3h0M129.2 161.6h0M240.8 72.3h0M89.2 163.9h0M118.4 163.3h0M161.5 169.9h0M30.2 132.1h0M228.8 110.6h0M243.1 66.6h0M112.9 160.9h0M56.9 164.0h0M51.7 165.1h0M2.8 75.9h0M242.5 60.4h0M151.0 169.3h0M190.7 154.9h0M8.9 119.8h0M5.7 114.2h0M7.7 94.7h0M69.5 174.6h0M69.6 163.7h0M6.8 100.5h0M117.9 168.6h0M246.4 19.8h0M193.9 159.9h0M188.2 159.8h0M198.2 149.0h0M201.4 144.2h0M25.5 138.4h0M1.5 109.5h0M7.7 27.1h0M43.7 156.9h0M256.6 22.6h0M197.3 164.6h0M226.8 125.5h0M248.6 15.2h0M171.8 163.6h0M211.6 141.1h0M53.8 159.5h0M152.9 158.7h0M196.0 154.6h0M247.6 48.0h0M261.5 25.3h0M18.7 131.4h0M22.7 97.1h0M250.8 24.2h0M149.6 141.6h0M44.1 143.5h0M5.8 6.7h0M171.5 169.7h0M166.3 173.0h0M24.0 28.7h0M92.7 172.8h0M254.9 33.5h0M123.8 165.0h0M19.9 136.8h0M233.4 86.3h0M113.9 172.7h0M244.0 52.6h0M228.7 64.4h0M2.2 1.9h0M249.7 52.8h0M7.4 12.2h0M218.4 131.6h0M199.2 170.1h0M229.0 94.5h0M249.3 5.1h0M2.3 24.9h0M232.4 98.8h0M32.8 142.4h0M-0.2 7.4h0M237.6 82.9h0M28.2 127.3h0M46.0 166.6h0M55.3 169.7h0M237.0 117.9h0M84.2 178.4h0M223.7 105.9h0M30.9 137.3h0M235.7 103.0h0M16.7 88.4h0M185.3 164.5h0M5.8 105.8h0M242.8 84.7h0M247.2 57.4h0M176.2 167.2h0M39.6 147.3h0M245.1 10.7h0M191.0 164.7h0M11.3 17.1h0M251.9 -0.1h0M238.7 89.1h0M59.8 159.8h0M150.0 163.6h0M238.2 112.5h0M202.3 174.7h0M256.4 43.4h0M181.6 168.6h0M224.3 96.5h0M253.7 48.6h0M196.3 174.6h0M238.0 96.3h0M182.1 173.5h0M199.7 159.5h0M247.5 63.0h0M193.7 169.1h0M252.6 59.6h0M202.8 166.5h0M0.2 13.4h0M191.1 173.7h0M250.9 10.5h0M204.6 179.7h0M212.1 146.8h0M14.6 110.6h0M97.6 175.5h0M47.6 161.6h0M-0.3 115.1h0M201.0 154.0h0M241.9 78.6h0M187.4 169.8h0M215.5 136.7h0M88.8 176.0h0M50.0 170.5h0M1.9 97.2h0M227.1 101.0h0M192.4 179.1h0M59.5 173.0h0M38.3 157.5h0M4.9 16.9h0M6.4 124.9h0M88.9 182.0h0M165.0 178.4h0M245.9 73.8h0M262.3 43.2h0M73.9 178.5h0M207.0 184.8h0M3.6 31.3h0M244.0 90.7h0M1.1 102.7h0M48.3 175.5h0M-0.3 19.7h0M258.6 38.2h0M189.9 184.0h0M145.5 167.0h0M40.3 167.5h0M263.7 36.7h0M139.4 165.4h0M255.4 4.5h0M53.7 175.5h0M234.1 92.3h0M259.3 48.0h0M21.3 142.7h0M241.1 100.8h0M58.4 178.5h0M258.4 58.7h0M44.2 171.7h0M234.7 123.1h0M231.6 127.6h0M79.0 181.1h0M11.5 86.5h0M7.2 21.6h0M3.3 119.6h0M34.6 152.7h0M254.7 54.4h0M2.7 92.0h0M217.9 141.9h0M192.7 188.4h0M259.9 53.2h0M112.4 178.7h0M233.3 133.0h0M65.0 170.1h0M260.7 19.1h0M237.4 128.0h0M146.5 173.2h0M228.0 132.0h0M206.1 170.8h0M142.0 170.9h0M208.8 165.9h0M195.8 184.0h0M10.7 128.2h0M197.9 190.1h0M260.3 31.6h0M133.6 166.3h0M81.3 170.9h0M201.1 184.4h0M221.8 136.3h0M198.7 179.3h0M29.2 154.5h0M239.6 107.1h0M222.8 147.0h0M137.0 171.0h0M64.0 175.9h0M244.4 105.9h0M121.1 172.6h0M203.6 149.4h0M249.9 90.1h0M252.2 65.2h0M43.3 177.5h0M256.2 9.8h0M232.6 114.7h0M266.5 17.8h0M255.1 15.2h0M217.2 147.4h0M186.8 176.1h0M207.1 145.2h0M156.0 172.2h0M48.5 180.8h0M260.5 13.5h0M211.7 170.8h0M223.4 130.4h0M185.5 181.4h0M103.2 174.0h0M-1.3 71.0h0M171.5 175.2h0M6.7 88.4h0M264.7 49.9h0M20.3 148.2h0M217.1 171.6h0M208.3 151.4h0M248.2 84.8h0M205.0 161.7h0M108.6 175.0h0M42.0 162.0h0M38.9 173.3h0M208.4 175.8h0M83.8 184.4h0M203.5 189.1h0M68.1 180.2h0M228.6 137.4h0M160.6 175.5h0M188.1 190.9h0M72.1 184.1h0M43.6 183.5h0M265.4 29.7h0M205.2 156.5h0M77.8 185.8h0M267.5 41.8h0M261.2 7.2h0M240.1 122.2h0M126.2 172.6h0M264.0 56.9h0M265.3 11.5h0M151.2 175.3h0M33.3 158.6h0M66.2 185.9h0M29.6 148.8h0M245.3 120.3h0M184.7 186.9h0M268.6 54.4h0M242.9 115.1h0M247.2 79.1h0M62.7 181.4h0M-1.0 88.0h0M176.7 172.8h0M88.6 188.0h0M257.2 64.1h0M259.9 1.1h0M73.2 189.5h0M213.8 152.4h0M243.5 126.1h0M179.7 183.6h0M270.0 48.2h0M262.6 62.7h0M272.0 38.8h0M270.3 13.1h0M265.3 3.2h0M211.8 161.6h0M193.0 193.9h0M128.5 167.5h0M36.5 163.3h0M68.3 191.2h0M179.4 188.9h0M27.1 143.9h0M140.1 176.1h0M182.8 192.9h0M219.1 176.8h0M150.6 181.1h0M3.0 83.6h0M248.6 69.1h0M117.8 177.1h0M187.4 196.4h0M92.3 192.1h0M116.6 182.5h0M170.0 180.3h0M250.3 105.8h0M132.0 172.5h0M175.9 178.6h0M106.1 179.6h0M139.7 181.8h0M165.5 184.1h0M246.8 110.6h0M145.2 178.9h0M13.5 133.0h0M7.1 133.3h0M34.8 169.2h0M94.0 179.6h0M0.6 124.7h0M31.1 164.5h0M11.1 137.8h0M123.4 178.5h0M165.0 190.4h0M211.5 188.2h0M260.6 68.7h0M251.7 74.6h0M249.2 124.4h0M252.2 80.2h0M75.7 195.0h0M251.3 100.0h0M146.4 184.6h0M207.5 192.4h0M24.6 151.2h0M128.9 177.5h0M246.4 101.0h0M248.7 115.8h0M2.0 130.0h0M91.9 197.5h0M181.2 178.5h0M24.1 157.3h0M268.7 34.5h0M241.5 131.2h0M225.0 152.4h0M219.3 152.4h0M234.3 139.5h0M197.1 197.4h0M234.1 108.7h0M134.8 178.1h0M273.7 53.2h0M155.7 178.4h0M269.4 7.3h0M1.4 135.7h0M100.4 180.1h0M215.0 165.8h0M258.0 74.7h0M83.5 189.9h0M210.3 156.8h0M10.2 143.6h0M5.8 139.7h0M213.9 176.5h0M121.9 184.3h0M216.1 157.9h0M34.6 147.2h0M59.9 186.0h0M174.0 183.9h0M57.3 191.5h0M54.0 181.7h0M19.7 154.2h0M54.2 187.0h0M255.8 104.3h0M81.5 195.6h0M229.1 142.9h0M120.2 190.0h0M15.3 146.0h0M15.8 140.6h0M14.9 151.4h0M269.8 -0.3h0M48.4 186.8h0M271.7 21.0h0M252.7 111.1h0M130.9 182.5h0M127.1 186.3h0M267.2 24.0h0M278.8 55.9h0M99.0 185.3h0M169.6 187.3h0M247.4 130.1h0M273.7 44.0h0M220.2 167.7h0M110.4 183.8h0M28.4 160.0h0M256.4 90.0h0M271.0 29.0h0M279.6 44.9h0M160.3 181.5h0M275.2 9.7h0M207.0 197.9h0M263.0 79.0h0M277.7 39.3h0M221.6 157.2h0M225.1 166.2h0M268.2 61.2h0M176.9 194.6h0M174.4 189.5h0M131.5 190.2h0M181.6 198.3h0M252.9 118.8h0M228.9 170.3h0M276.3 49.1h0M9.3 149.3h0M97.3 198.4h0M135.4 185.8h0M155.3 184.4h0M15.0 157.4h0M262.4 89.6h0M24.8 163.7h0M180.6 204.1h0M277.6 20.6h0M160.7 187.0h0M267.9 89.6h0M274.6 15.9h0M256.6 99.0h0M34.8 176.9h0M263.8 73.3h0M210.9 181.1h0M246.9 95.5h0M252.3 19.3h0M283.5 40.6h0M87.1 194.1h0M260.0 84.9h0M0.3 141.7h0M19.8 160.5h0M191.8 199.8h0M273.8 3.8h0M254.9 69.9h0M280.0 14.6h0M285.2 46.0h0M256.8 114.5h0M252.6 129.4h0M4.6 145.8h0M137.0 191.5h0M281.8 35.3h0M275.4 25.9h0M54.9 196.8h0M274.7 33.9h0M28.9 169.3h0M278.9 30.4h0M283.1 19.5h0M70.8 196.3h0M273.3 58.6h0M232.6 166.0h0M141.0 187.4h0M279.2 3.0h0M93.1 202.7h0M254.0 85.5h0M265.3 94.6h0M266.0 67.0h0M97.1 190.5h0M60.2 196.5h0M74.9 200.4h0M156.6 190.3h0M223.5 172.3h0M0.4 149.9h0M253.0 94.6h0M93.6 185.6h0M151.2 188.3h0M19.4 166.2h0M285.8 12.6h0M223.9 178.1h0M244.8 135.0h0M14.6 163.2h0M130.2 196.0h0M215.4 184.2h0M23.8 169.3h0M81.0 200.7h0M-1.0 155.9h0M250.5 135.5h0M265.9 84.2h0M259.4 94.5h0M284.7 29.9h0M169.7 193.1h0M258.8 119.6h0M30.9 174.1h0M205.9 203.9h0M228.8 148.6h0M270.8 68.6h0M278.1 61.8h0M142.2 194.2h0M38.1 185.6h0M269.2 79.5h0M281.9 50.9h0M269.2 73.6h0M291.1 44.9h0M220.2 162.4h0M104.7 184.8h0M28.6 179.5h0M285.8 55.2h0M33.3 182.5h0M254.8 123.9h0M256.0 133.7h0M226.6 158.0h0M186.2 202.0h0M196.3 203.4h0M72.2 205.7h0M114.8 187.4h0M49.9 198.2h0M4.0 159.5h0M10.2 154.9h0M220.5 182.5h0M288.9 40.3h0M109.1 189.5h0M4.8 153.7h0M165.7 198.5h0M223.8 141.4h0M255.2 139.1h0M224.4 186.5h0M228.7 162.4h0M78.6 190.8h0M103.1 189.8h0M86.9 199.6h0M100.8 194.7h0M42.9 189.3h0M46.1 193.8h0M258.4 128.0h0M288.4 18.2h0M146.1 198.7h0M219.0 188.5h0M212.7 131.3h0M234.6 171.3h0M273.5 64.5h0M228.8 175.8h0M185.5 207.6h0M287.8 34.9h0M171.7 197.6h0M228.6 190.2h0M293.5 37.3h0M223.8 192.6h0M237.5 164.0h0M149.7 194.1h0M191.0 205.6h0M24.2 182.7h0M233.7 159.8h0M62.9 191.0h0M212.6 194.0h0M85.2 204.5h0M299.4 38.6h0M37.2 190.6h0M234.5 150.3h0M38.8 180.2h0M32.8 193.3h0M161.3 194.1h0M25.2 174.7h0M296.2 43.1h0M257.4 80.3h0M297.2 33.1h0M287.2 24.3h0M78.0 205.1h0M290.3 29.7h0M201.9 194.6h0M302.6 33.5h0M230.7 154.5h0M233.9 145.2h0M20.7 178.1h0M231.1 185.7h0M254.3 144.4h0M30.9 187.7h0M272.2 93.3h0M119.0 196.0h0M65.5 196.3h0M231.2 194.7h0M125.8 191.7h0M236.6 155.1h0M286.2 0.1h0M155.4 195.5h0M261.9 99.7h0M63.2 201.7h0M14.6 169.2h0M295.5 28.0h0M176.3 200.5h0M307.2 35.1h0M151.8 199.7h0M24.9 188.3h0M180.1 209.7h0M145.8 190.2h0M170.8 202.8h0M258.6 108.9h0M250.3 147.8h0M159.7 199.3h0M106.6 194.7h0M166.6 205.2h0M140.2 199.6h0M114.7 192.4h0M19.3 172.5h0M201.6 200.6h0M288.8 49.8h0M57.7 201.9h0M40.4 195.2h0M103.6 199.7h0M200.6 206.7h0M115.6 200.8h0M259.1 144.0h0M109.1 200.9h0M19.3 186.1h0M260.8 138.0h0M250.0 141.7h0M175.0 206.5h0M234.3 176.5h0M39.6 200.9h0M256.0 149.6h0M240.6 139.1h0M267.8 99.1h0M52.3 203.1h0M51.3 192.1h0M14.0 175.4h0M274.2 76.3h0M111.9 196.4h0M40.6 152.4h0M281.4 25.1h0M75.8 210.1h0M66.5 206.9h0M94.6 207.6h0M195.5 209.6h0M292.7 23.1h0M240.5 159.4h0M239.6 168.7h0M42.3 206.0h0M218.2 193.8h0M9.4 171.5h0M263.9 142.6h0M264.6 109.2h0M44.7 199.7h0M295.5 49.1h0M34.8 198.2h0M280.8 9.1h0M105.7 205.6h0M227.8 181.7h0M61.1 207.0h0M143.2 203.9h0M266.1 134.5h0M28.6 199.1h0M243.6 164.3h0M239.4 179.5h0M36.8 205.7h0M27.5 193.1h0M239.0 143.8h0M47.5 205.0h0M148.8 204.4h0M144.8 208.9h0M9.6 160.4h0M245.8 139.7h0M155.9 203.5h0M237.8 134.9h0M304.4 40.3h0M268.5 144.9h0M70.2 211.3h0M241.7 154.0h0M222.2 198.0h0M20.1 191.9h0M300.9 28.0h0M32.3 203.4h0M38.9 210.7h0M264.7 119.1h0M124.4 196.7h0M234.7 190.0h0M273.3 98.7h0M55.6 207.4h0M23.3 196.8h0M234.1 181.7h0M161.5 204.5h0M279.2 67.6h0M99.3 203.4h0M246.0 156.8h0M240.1 191.5h0M240.1 149.0h0M-1.4 162.1h0M17.7 197.6h0M3.8 165.4h0M262.2 124.0h0M293.9 16.9h0M215.9 198.7h0M210.3 207.2h0M68.8 201.4h0M64.1 212.5h0M244.8 145.1h0M82.0 209.0h0M9.5 166.0h0M262.2 114.2h0M240.1 174.3h0M205.2 209.8h0M127.4 201.4h0M283.0 60.0h0M275.2 81.5h0M51.0 210.1h0M271.9 85.9h0M289.9 5.2h0M279.9 75.0h0M82.4 214.3h0M301.5 45.8h0M45.4 210.7h0M58.4 212.1h0M88.7 208.5h0M296.5 55.2h0M42.4 215.3h0M245.8 176.8h0M291.5 53.5h0M22.7 202.5h0M238.6 185.5h0M215.3 205.9h0M68.3 216.3h0M307.5 44.7h0M268.1 113.6h0M291.8 -0.6h0M190.2 211.3h0M195.3 215.8h0M243.9 187.4h0M236.6 195.7h0M135.7 196.8h0M288.3 62.2h0M227.7 198.7h0M93.1 212.8h0M245.9 150.7h0M27.6 206.1h0M189.6 216.8h0M306.7 28.9h0M251.1 153.6h0M39.2 220.4h0M200.3 212.9h0M139.7 209.9h0M133.2 201.7h0M32.6 209.8h0M77.3 214.9h0M98.3 213.3h0M3.3 171.4h0M17.7 206.2h0M300.9 52.0h0M121.6 201.7h0M196.9 221.4h0M311.8 33.2h0M91.4 218.3h0M264.6 128.7h0M36.5 215.7h0M262.7 148.5h0M284.1 65.7h0M100.3 208.3h0M306.0 49.9h0M153.0 207.9h0M276.9 89.5h0M312.2 27.1h0M291.5 11.0h0M73.7 218.4h0M102.1 216.9h0M317.8 25.5h0M311.0 52.3h0M268.4 124.2h0M184.8 213.3h0M16.2 180.9h0M33.7 221.2h0M211.3 201.5h0M298.1 21.4h0M305.9 55.7h0M278.6 98.7h0M297.1 11.6h0M104.3 211.7h0M264.3 104.1h0M270.0 104.1h0M281.2 93.8h0M85.3 219.0h0M303.4 23.0h0M175.0 212.3h0M13.4 185.9h0M118.1 206.1h0M69.2 221.8h0M22.5 208.5h0M7.7 186.3h0M284.4 5.4h0M310.3 39.5h0M6.7 176.2h0M134.1 210.1h0M149.0 211.4h0M0.0 177.7h0M179.8 215.7h0M219.5 202.6h0M79.5 220.4h0M44.9 220.3h0M244.0 182.2h0M275.5 104.0h0M109.4 210.5h0M312.7 46.6h0M170.5 215.8h0M295.7 5.6h0M124.1 207.1h0M14.3 191.4h0M270.0 130.2h0M210.4 212.5h0M20.5 213.7h0M169.7 210.0h0M316.9 50.3h0M314.4 21.2h0M184.5 219.2h0M205.6 215.5h0M87.8 213.8h0M255.2 157.4h0M11.7 196.7h0M308.9 22.6h0M78.4 226.5h0M191.1 222.1h0M284.4 71.3h0M114.8 211.1h0M242.3 197.4h0M220.7 208.0h0M269.9 118.7h0M301.5 7.3h0M248.6 161.0h0M304.7 12.2h0M273.7 126.6h0M300.9 1.2h0M8.3 192.0h0M277.2 109.3h0M301.2 58.4h0M318.9 45.5h0M244.7 170.7h0M60.0 217.5h0M248.7 166.6h0M113.3 216.8h0M275.5 71.1h0M249.7 172.7h0M305.9 17.7h0M254.8 173.2h0M316.7 30.6h0M271.7 109.3h0M300.4 16.2h0M259.2 153.4h0M107.8 216.3h0M175.0 218.4h0M268.6 150.2h0M26.8 212.3h0M274.5 121.1h0M280.1 84.3h0M280.9 104.2h0M129.9 206.4h0M317.0 35.9h0M158.3 209.4h0M154.1 213.6h0M49.8 221.9h0M159.5 215.4h0M169.1 221.3h0M210.9 217.9h0M143.7 214.5h0M306.2 3.2h0M253.6 162.5h0M230.5 205.0h0M311.4 16.6h0M249.2 188.2h0M233.2 200.3h0M163.5 220.1h0M112.1 205.6h0M249.8 182.7h0M286.6 104.9h0M279.7 119.5h0M165.4 215.1h0M314.9 41.5h0M31.2 215.6h0M153.7 219.0h0M206.2 221.4h0M74.1 224.0h0M245.6 192.7h0M184.5 224.9h0M104.3 221.3h0M272.3 135.1h0M179.5 221.8h0M148.7 216.9h0M128.3 211.8h0M137.5 204.9h0M211.7 224.0h0M322.1 30.9h0M301.3 64.3h0M312.1 4.1h0M142.9 220.2h0M201.4 225.6h0M41.6 225.1h0M4.4 181.4h0M315.3 55.5h0M143.6 226.0h0M323.3 36.6h0M320.1 40.3h0M282.8 109.5h0M64.4 220.7h0M273.1 141.0h0M238.6 201.3h0M254.4 186.9h0M138.1 215.0h0M288.8 74.9h0M27.9 220.0h0M110.0 221.8h0M274.2 114.8h0M215.9 211.7h0M10.4 180.7h0M284.3 99.2h0M252.6 178.2h0M320.4 54.7h0M207.0 226.7h0M253.9 168.0h0M4.7 196.9h0M132.7 216.0h0M264.7 154.0h0M201.2 218.8h0M323.2 25.2h0M68.8 227.0h0M310.8 58.6h0M247.9 197.6h0M316.2 60.6h0M273.8 146.9h0M224.9 203.5h0M216.2 227.4h0M11.7 207.1h0M283.9 78.8h0M308.2 8.3h0M8.2 212.0h0M317.0 2.3h0M289.6 67.9h0M245.7 202.7h0M306.6 62.0h0M251.5 193.2h0M324.5 43.3h0M88.4 223.3h0M286.0 84.2h0M284.0 89.0h0M22.3 219.1h0M289.7 80.5h0M148.4 222.4h0M280.0 114.3h0M120.1 211.4h0M115.9 223.0h0M251.7 201.5h0M211.2 230.6h0M48.6 215.8h0M163.6 210.2h0M278.9 125.2h0M268.3 158.0h0M2.4 191.6h0M127.9 218.5h0M226.8 208.8h0M235.8 206.1h0M214.4 235.7h0M111.1 227.3h0M260.9 158.6h0M325.6 20.2h0M222.8 212.7h0M327.7 28.4h0M257.2 182.4h0M268.0 139.2h0M123.8 215.0h0M317.2 14.7h0M195.2 226.5h0M322.9 49.3h0M257.3 191.7h0M255.3 196.9h0M254.9 206.0h0M193.3 231.7h0M149.1 228.2h0M329.6 44.8h0M132.3 222.2h0M1.6 186.2h0M5.6 206.8h0M121.1 226.0h0M137.3 220.3h0M307.0 67.8h0M228.5 214.0h0M317.9 8.4h0M204.8 231.2h0M158.5 221.3h0M328.8 39.0h0M319.9 19.9h0M174.1 223.8h0M290.2 88.2h0M127.0 224.3h0M73.8 229.9h0M153.7 224.6h0M52.4 227.1h0M2.1 202.0h0M46.6 227.0h0M189.2 227.7h0M30.5 225.9h0M258.4 176.8h0M215.5 220.3h0M299.6 69.7h0M287.8 111.1h0M165.2 225.6h0M116.3 229.4h0M258.8 164.7h0M277.6 137.2h0M208.3 235.8h0M83.5 224.9h0M273.1 153.1h0M159.5 226.5h0M296.2 61.1h0M287.3 93.8h0M233.0 211.0h0M257.8 201.3h0M278.3 142.9h0M239.3 210.6h0M294.6 83.6h0M118.4 217.2h0M309.3 73.1h0M327.4 33.6h0M137.7 226.2h0M237.3 215.0h0M166.6 230.9h0M111.9 233.2h0M210.9 240.8h0M192.0 237.0h0M54.2 215.7h0M285.1 117.0h0M241.5 205.7h0M36.2 226.7h0M34.7 232.2h0M41.2 230.7h0M141.3 231.3h0M312.2 65.0h0M332.6 32.3h0M262.6 180.3h0M334.3 38.0h0M121.5 231.5h0M289.7 99.4h0M199.0 231.1h0M57.8 229.0h0M132.2 228.0h0M204.9 241.0h0M304.1 72.8h0M106.5 231.3h0M245.0 209.5h0M68.0 232.5h0M55.2 221.5h0M323.1 14.8h0M197.0 236.6h0M199.4 241.7h0M207.6 245.6h0M263.2 174.0h0M18.7 223.7h0M82.1 230.5h0M178.8 227.3h0M171.7 228.4h0M331.3 -0.2h0M261.2 196.1h0M330.9 18.9h0M117.6 235.5h0M294.0 71.9h0M8.3 201.6h0M218.8 216.3h0M323.8 8.8h0M35.5 237.8h0M338.4 34.3h0M126.9 229.6h0M263.8 162.5h0M334.6 43.4h0M312.8 11.1h0M321.9 60.1h0M334.6 4.3h0M265.1 191.9h0M154.9 229.9h0M261.1 132.7h0M318.3 65.4h0M325.5 55.0h0M322.1 2.2h0M14.1 201.9h0M125.5 235.0h0M219.3 232.6h0M202.3 236.2h0M260.8 187.5h0M221.5 237.8h0M122.4 220.8h0M63.5 228.5h0M206.9 250.9h0M41.1 236.2h0M327.1 3.6h0M87.9 229.1h0M193.2 242.4h0M60.1 223.8h0M267.4 177.0h0M268.6 171.1h0M85.4 234.9h0M277.2 131.2h0M224.1 218.2h0M314.2 70.7h0M128.5 239.5h0M126.2 244.5h0M294.4 77.6h0M328.7 13.5h0M282.8 129.1h0M24.6 224.7h0M53.8 232.9h0M161.2 231.4h0M93.5 223.7h0M284.2 123.1h0M339.5 45.3h0M14.5 212.4h0M234.6 219.0h0M61.3 233.9h0M216.4 241.2h0M273.3 160.6h0M220.2 222.4h0M236.6 224.0h0M300.0 81.0h0M170.8 234.1h0M265.4 184.8h0M122.8 249.1h0M329.8 8.0h0M47.7 232.4h0M89.9 238.4h0M42.2 241.9h0M229.5 219.0h0M328.3 50.0h0M116.7 241.1h0M291.3 58.5h0M97.0 219.1h0M221.8 227.8h0M174.8 237.7h0M295.3 99.2h0M187.7 239.8h0M111.9 238.6h0M122.5 239.4h0M299.4 75.5h0M282.3 134.5h0M306.2 78.3h0M1.7 211.2h0M202.6 254.2h0M164.3 236.3h0M268.6 164.1h0M213.1 246.4h0M278.4 149.9h0M157.3 235.0h0M143.5 237.8h0M196.8 246.4h0M339.5 0.8h0M105.2 226.2h0M169.1 239.6h0M331.1 55.0h0M159.3 240.0h0M295.2 66.2h0M20.7 229.0h0M106.6 236.7h0M183.2 230.7h0M227.3 235.2h0M327.8 60.3h0M293.0 93.8h0M226.0 241.1h0M99.2 224.4h0M293.4 110.8h0M36.2 243.3h0M339.6 50.7h0M111.9 244.3h0M283.4 139.8h0M120.6 244.4h0M52.7 238.3h0M173.3 243.7h0M269.7 181.3h0M167.6 245.5h0M298.9 94.2h0M46.7 237.7h0M296.1 116.3h0M182.6 236.6h0M269.3 188.2h0M16.4 218.2h0M345.1 45.6h0M13.0 223.0h0M340.0 39.7h0M202.3 247.2h0M31.1 246.1h0M66.6 237.6h0M254.4 211.4h0M178.7 246.1h0M176.7 232.3h0M260.1 206.9h0M272.7 167.1h0M163.9 242.0h0M231.2 224.2h0M153.8 239.8h0M259.2 170.4h0M183.8 249.0h0M334.0 49.5h0M227.0 229.6h0M55.2 243.4h0M225.8 223.7h0M336.3 55.4h0M26.9 230.2h0M240.8 219.6h0M296.1 89.0h0M138.7 237.2h0M58.9 239.0h0M131.1 234.1h0M192.7 249.9h0M138.8 243.3h0M324.0 65.2h0M100.4 229.7h0M218.0 248.8h0M232.5 229.3h0M7.5 222.1h0M178.7 240.6h0M170.1 250.1h0M134.1 239.4h0M275.3 189.7h0M10.7 217.2h0M217.0 254.3h0M146.4 233.0h0M156.3 245.1h0M345.5 40.1h0M336.6 28.8h0M4.5 216.6h0M334.8 10.2h0M262.1 212.4h0M320.0 70.3h0M231.6 239.3h0M222.1 254.9h0M131.8 244.4h0M151.5 234.3h0M198.1 251.5h0M136.1 232.2h0M35.1 249.4h0M283.1 152.9h0M56.4 249.1h0M234.3 234.2h0M63.7 242.1h0M40.1 247.4h0M289.5 121.5h0M339.5 7.1h0M341.5 56.3h0M323.0 75.2h0M272.7 174.7h0M282.9 145.8h0M106.7 242.0h0M187.7 233.6h0M72.6 239.6h0M241.9 224.7h0M287.4 133.0h0M287.4 148.6h0M275.2 179.7h0M22.7 234.1h0M116.5 247.8h0M48.4 242.6h0M169.1 255.5h0M183.6 243.1h0M304.1 91.2h0M27.4 250.3h0M221.2 244.0h0M161.7 247.2h0M34.3 254.6h0M263.0 201.6h0M234.9 244.0h0M2.1 221.9h0M246.8 224.4h0M293.0 126.1h0M277.6 156.2h0M292.9 131.4h0M334.5 15.3h0M218.4 259.8h0M94.8 229.0h0M18.6 238.2h0M114.6 252.6h0M91.4 233.3h0M264.1 168.0h0M297.0 135.0h0M281.4 160.0h0M252.6 217.3h0M30.4 240.7h0M207.6 256.9h0M238.2 229.3h0M188.6 246.0h0M340.1 13.4h0M227.3 255.7h0M157.3 250.8h0M144.5 243.8h0M201.4 259.6h0M327.8 77.5h0M212.0 252.3h0M29.4 235.2h0M96.1 236.4h0M200.4 265.2h0M0.6 227.6h0M73.5 234.9h0M229.6 245.1h0M240.7 234.3h0M229.0 250.5h0M330.3 24.2h0M164.9 251.5h0M288.1 127.4h0M271.1 193.4h0M223.7 260.7h0M179.4 252.0h0M277.8 163.9h0M292.0 104.8h0M291.0 137.1h0M244.1 229.7h0M105.0 247.0h0M249.7 228.7h0M297.0 106.3h0M247.1 219.1h0M298.1 128.1h0M40.1 253.2h0M288.3 142.4h0M329.7 65.7h0M280.3 179.1h0M110.3 249.4h0M322.7 80.8h0M165.3 259.5h0M294.8 140.9h0M312.4 77.3h0M268.1 203.2h0M346.5 57.2h0M50.9 247.4h0M223.8 249.2h0M290.0 153.7h0M265.9 217.0h0M212.9 258.2h0M325.9 70.5h0M278.5 174.3h0M115.7 258.1h0M285.4 176.8h0M295.2 121.5h0M345.3 51.4h0M292.5 145.8h0M243.4 214.8h0M300.5 122.3h0M196.7 256.4h0M282.7 167.3h0M335.0 66.4h0M311.2 82.7h0M125.1 253.7h0M331.2 71.4h0M302.7 107.5h0M249.7 207.2h0M14.7 228.4h0M339.2 61.8h0M305.3 103.1h0M316.9 81.3h0M150.4 244.7h0M344.4 9.2h0M101.5 234.6h0M206.1 262.6h0M161.1 255.6h0M317.7 75.7h0M301.9 116.5h0M246.7 234.7h0M290.7 116.1h0M66.8 247.4h0M232.6 257.0h0M188.0 252.4h0M16.6 233.5h0M24.6 239.1h0M237.6 238.7h0M299.2 111.7h0M95.2 241.9h0M338.0 19.3h0M323.0 86.4h0M74.3 245.4h0M174.7 249.6h0M286.2 157.4h0M286.3 163.0h0M306.9 117.9h0M8.8 227.7h0M277.4 169.6h0M69.2 243.1h0M290.9 178.4h0M212.1 263.3h0M298.6 145.9h0M333.5 60.6h0M303.5 129.1h0M79.3 235.3h0M60.8 246.3h0M229.0 261.5h0M309.2 88.1h0M350.4 48.0h0M110.2 255.5h0M25.6 244.6h0M10.8 233.4h0M63.4 251.4h0M302.8 134.9h0M67.9 255.6h0M28.8 255.7h0M151.5 250.0h0M291.5 159.9h0M145.3 249.5h0M148.5 239.2h0M267.2 197.6h0M57.0 254.7h0M105.6 258.4h0M305.5 83.7h0M237.8 255.2h0M119.7 253.9h0M139.5 251.3h0M149.2 254.6h0M101.2 240.0h0M78.2 240.7h0M195.0 267.2h0M180.8 256.8h0M71.0 250.8h0M332.9 76.8h0M21.5 248.8h0M129.2 249.7h0M341.9 30.0h0M273.6 184.8h0M242.4 252.1h0M174.7 255.8h0M99.6 245.2h0M349.8 8.6h0M328.1 83.6h0M84.2 241.1h0M350.4 42.2h0M110.9 261.3h0M317.6 86.7h0M45.2 247.3h0M155.3 255.8h0M234.1 251.1h0M338.3 78.4h0M279.1 185.1h0M248.2 251.1h0M89.9 243.5h0M93.6 247.9h0M308.2 132.7h0M288.7 183.5h0M290.0 188.9h0M268.1 212.5h0M294.7 150.4h0M20.0 243.2h0M244.6 246.6h0M346.3 13.9h0M171.1 261.0h0M252.0 223.2h0M344.9 62.9h0M246.2 256.1h0M309.0 94.0h0M339.9 68.0h0M238.7 248.3h0M335.6 23.9h0M300.0 101.7h0M303.9 143.3h0M256.7 221.3h0M128.7 256.9h0M99.8 250.3h0M62.0 256.2h0M286.2 171.7h0M272.7 215.6h0M257.9 215.5h0M189.8 263.1h0M336.8 72.7h0M135.3 248.1h0M228.3 267.9h0M86.3 247.0h0M35.1 259.7h0M272.9 198.5h0M16.0 247.1h0M314.1 90.8h0M4.7 231.8h0M13.8 241.4h0M344.4 34.7h0M236.6 261.2h0M232.9 265.1h0M350.5 17.1h0M343.2 80.6h0M7.8 242.3h0M303.9 97.3h0M59.5 261.0h0M343.4 18.6h0M191.5 257.3h0M333.7 82.1h0M341.6 24.4h0M123.1 259.0h0M222.9 266.4h0M305.5 123.6h0M241.8 258.7h0M319.9 92.4h0M189.9 269.0h0M105.3 252.6h0M118.9 262.1h0M270.0 220.4h0M240.5 243.1h0M277.0 195.1h0M273.5 203.7h0M65.3 260.6h0M333.0 87.4h0M224.3 272.0h0M249.0 213.3h0M89.0 252.1h0M347.9 76.9h0M80.4 245.9h0M217.5 265.2h0M271.4 208.4h0M355.4 44.5h0M82.8 251.1h0M265.4 207.7h0M338.4 90.1h0M193.5 272.8h0M355.9 50.6h0M300.9 86.7h0M251.2 257.3h0M278.6 216.3h0M46.4 252.6h0M34.9 265.6h0M76.6 250.4h0M123.0 265.2h0M350.8 53.6h0M297.5 160.8h0M293.9 184.0h0M347.4 22.7h0M90.7 257.5h0M292.1 172.5h0M79.3 255.0h0M349.4 2.3h0M133.5 253.6h0M348.4 82.3h0M289.5 167.3h0M62.6 265.6h0M338.7 84.4h0M127.7 262.8h0M121.1 270.0h0M159.5 261.5h0M296.3 176.7h0M342.6 74.1h0M261.7 219.6h0M60.5 270.5h0M295.3 189.7h0M272.7 225.2h0M306.5 111.8h0M260.4 225.4h0M347.1 28.9h0M132.0 266.0h0M280.7 191.1h0M153.7 260.5h0M127.3 269.0h0M294.4 165.4h0M244.7 239.7h0M354.3 12.1h0M356.5 17.5h0M265.8 223.6h0M360.4 13.0h0M255.4 228.0h0M301.6 174.8h0M84.8 256.6h0M10.8 246.9h0M9.6 252.4h0M335.2 95.0h0M349.9 36.1h0M354.1 82.6h0M218.9 271.1h0M242.0 264.1h0M92.4 263.3h0M275.9 211.3h0M13.2 256.9h0M278.3 200.8h0M298.3 194.6h0M237.9 267.2h0M325.9 90.7h0M354.3 5.1h0M309.6 127.7h0M355.4 38.5h0M233.8 270.8h0M340.7 95.4h0M61.1 275.8h0M186.6 273.3h0M24.3 259.5h0M93.3 269.0h0M361.2 40.5h0M100.6 255.8h0M22.8 254.0h0M106.0 264.1h0M350.4 66.4h0M283.6 202.8h0M343.8 86.9h0M40.2 261.1h0M74.0 256.1h0M349.0 72.0h0M79.6 260.0h0M336.5 100.1h0M354.2 32.7h0M208.6 267.4h0M349.8 87.2h0M300.3 151.8h0M259.8 231.3h0M346.4 92.2h0M352.5 27.3h0M282.3 197.0h0M314.2 96.4h0M68.3 265.4h0M54.4 260.2h0M43.9 257.2h0M299.9 187.8h0M230.1 274.0h0M300.1 139.9h0M352.4 92.0h0M264.4 229.6h0M88.1 267.6h0M209.1 272.8h0M303.9 184.3h0M292.0 194.4h0M350.9 96.8h0M66.0 270.6h0M307.8 187.4h0M353.1 22.1h0M164.8 264.8h0M354.4 -0.8h0M330.8 92.3h0M246.9 261.9h0M177.2 261.1h0M362.6 18.5h0M256.1 260.2h0M295.7 155.7h0M294.3 199.3h0M360.1 34.5h0M174.6 265.5h0M297.5 170.7h0M345.4 97.5h0M277.7 226.7h0M303.6 191.8h0M285.9 207.7h0M49.6 257.9h0M345.0 68.5h0M309.3 143.3h0M169.7 267.6h0M284.6 187.7h0M175.0 270.8h0M307.7 138.1h0M69.4 274.3h0M330.3 97.9h0M131.2 273.5h0M72.1 269.0h0M199.0 271.6h0M40.3 266.4h0M115.4 270.7h0M94.9 253.4h0M313.5 139.2h0M359.0 23.1h0M51.0 265.0h0M326.1 101.4h0M278.6 206.4h0M5.1 247.7h0M357.6 94.9h0M286.3 193.2h0M281.7 211.5h0M301.8 157.4h0M169.9 273.4h0M7.4 258.3h0M350.5 60.8h0M287.3 212.9h0M115.2 265.2h0M92.1 273.9h0M360.4 46.5h0M204.0 269.1h0M252.0 233.0h0M311.0 122.3h0M75.5 263.9h0M86.7 273.8h0M29.7 267.0h0M132.7 259.9h0M359.0 7.7h0M300.1 165.6h0M269.0 228.3h0M136.8 263.0h0M239.5 272.8h0M268.6 234.1h0M82.3 264.5h0M283.9 182.3h0M353.4 101.5h0M55.6 272.0h0M160.0 267.7h0M83.3 269.6h0M290.1 203.7h0M355.9 88.1h0M243.7 269.3h0M182.9 262.3h0M96.1 277.8h0M87.1 261.8h0M101.0 261.7h0M46.0 262.4h0M179.9 267.4h0M273.6 231.2h0M313.0 188.3h0M309.5 99.9h0M291.8 208.8h0M220.1 276.9h0M29.8 261.5h0M226.0 276.9h0M72.0 279.0h0M213.7 269.3h0M360.0 54.8h0M56.6 266.1h0M18.7 258.0h0M256.6 235.3h0M186.2 257.8h0M18.7 263.2h0M361.6 2.2h0M97.3 265.8h0M259.4 239.7h0M359.9 84.1h0M246.9 274.0h0M155.0 266.2h0M292.9 214.3h0M355.7 63.6h0M353.8 76.9h0M337.8 105.8h0M24.5 264.9h0M214.5 275.0h0M101.9 267.8h0M354.5 71.0h0M164.9 270.8h0M313.9 133.0h0M309.4 181.6h0M235.5 276.8h0M350.6 107.0h0M316.5 120.9h0M143.4 255.3h0M310.0 106.2h0M74.7 284.2h0M98.1 272.2h0M319.3 98.6h0M278.9 232.2h0M209.1 278.4h0M110.1 267.4h0M193.6 277.8h0M251.5 238.5h0M80.8 274.4h0M314.7 102.5h0M309.5 192.8h0M96.1 259.1h0M252.6 248.6h0M312.4 111.4h0M135.4 269.7h0M305.1 164.0h0M303.8 170.0h0M0.7 236.2h0M19.9 268.7h0M315.1 126.9h0M3.6 253.4h0M324.4 96.1h0M298.7 181.9h0M347.9 102.1h0M1.7 242.5h0M344.6 106.9h0M6.5 237.3h0M77.9 268.9h0M275.7 220.8h0M305.9 197.0h0M300.7 199.7h0M199.2 277.6h0M185.3 267.1h0M331.9 103.8h0M45.7 267.9h0M160.0 273.6h0M255.1 243.3h0M137.8 257.0h0M140.1 266.9h0M149.6 269.6h0M333.8 109.8h0M326.7 106.6h0M180.5 273.3h0M358.9 100.5h0M341.9 101.9h0M119.2 275.1h0M142.0 260.9h0M-0.7 249.0h0M154.9 272.0h0M71.1 260.6h0M318.7 137.2h0M305.0 148.7h0M361.5 63.6h0M147.6 259.7h0M175.4 276.2h0M321.1 104.2h0M358.5 28.7h0M65.7 278.7h0M265.2 241.4h0M150.2 264.4h0M241.0 278.1h0M105.4 271.4h0M279.8 237.8h0M281.2 222.2h0M144.1 270.9h0M359.4 68.8h0M195.9 282.6h0M312.4 116.7h0M110.3 272.9h0M200.6 285.1h0M355.0 57.5h0M283.3 227.7h0M316.6 108.0h0M356.7 106.0h0M261.0 244.9h0M297.5 210.0h0M55.3 277.4h0M125.3 274.1h0M45.8 273.5h0M75.1 273.9h0M361.3 90.2h0M183.8 278.0h0M310.6 162.9h0M340.6 110.8h0M251.7 263.4h0M360.3 110.5h0M344.2 3.7h0M274.6 236.6h0M12.2 262.0h0M149.7 274.8h0M188.6 279.2h0M302.0 205.2h0M249.2 243.6h0M84.0 279.2h0M318.1 143.0h0M205.0 288.8h0M214.1 280.3h0M204.1 280.9h0M138.9 273.4h0M170.3 278.8h0M117.7 281.5h0M313.6 177.7h0M204.1 274.9h0M114.1 276.6h0M199.6 290.7h0M309.0 168.7h0M313.5 172.3h0M347.0 112.0h0M320.3 125.7h0M308.0 174.9h0M308.5 152.7h0M319.5 131.4h0M144.2 276.4h0M257.9 248.9h0M133.2 278.8h0M362.7 104.9h0M195.6 261.7h0M14.2 266.9h0M317.9 114.7h0M122.5 279.0h0M303.1 210.3h0M265.9 247.3h0M304.0 179.2h0M283.8 217.5h0M296.2 204.4h0M159.6 279.1h0M256.2 254.2h0M124.2 284.1h0M59.1 281.2h0M77.8 279.1h0M25.6 270.7h0M321.8 119.8h0M1.5 258.9h0M52.9 283.0h0M314.4 166.6h0M42.3 277.6h0M102.1 276.3h0M306.9 158.4h0M325.2 129.6h0M261.2 260.2h0M1.7 264.5h0M289.0 218.4h0M184.3 283.9h0M167.0 282.7h0M89.8 279.0h0M50.0 277.0h0M47.4 287.5h0M308.0 207.9h0M288.6 229.6h0M231.0 280.0h0M354.2 111.2h0M249.1 268.3h0M288.0 198.7h0M325.5 124.2h0M359.5 75.1h0M284.8 240.4h0M319.2 179.6h0M161.9 283.6h0M331.5 115.3h0M154.4 277.9h0M284.1 233.8h0M229.0 284.7h0M292.9 226.1h0M194.7 288.3h0M263.4 235.8h0M321.9 110.3h0M298.1 227.0h0M289.2 235.1h0M312.1 147.5h0M262.2 252.6h0M80.7 283.7h0M148.7 280.3h0M153.3 283.7h0M32.5 271.6h0M127.9 279.2h0M222.9 286.6h0M319.0 169.6h0M331.0 125.6h0M165.6 288.1h0M143.1 282.0h0M130.4 284.3h0M138.8 278.6h0M271.6 247.3h0M269.9 239.6h0M145.3 265.3h0M136.3 283.4h0M274.7 242.6h0M306.9 202.4h0M140.7 287.0h0M190.5 284.3h0M134.7 288.6h0M208.8 284.5h0M20.7 274.0h0M164.9 276.9h0M256.4 266.3h0M160.8 290.9h0M253.5 271.9h0M169.9 291.1h0M171.7 286.2h0M68.6 283.3h0M302.6 215.5h0M293.9 220.5h0M57.7 286.6h0M233.1 288.3h0M178.2 285.8h0M108.0 277.7h0M277.6 248.0h0M323.8 146.5h0M47.1 281.6h0M351.3 115.9h0M182.0 289.6h0M7.3 265.0h0M227.1 289.4h0M303.1 225.2h0M328.1 111.3h0M175.8 291.1h0M268.3 252.4h0M180.6 294.8h0M63.3 284.8h0M174.5 281.8h0M52.0 252.8h0M147.5 285.9h0M16.0 277.7h0M164.7 294.7h0M287.6 223.7h0M334.0 120.5h0M236.3 283.1h0M328.2 119.8h0M357.6 115.8h0M234.0 293.8h0M26.2 276.1h0M196.1 295.5h0M319.6 164.5h0M144.0 291.2h0M187.5 288.7h0M179.5 280.2h0M9.5 270.1h0M186.0 294.3h0M64.6 290.3h0M323.7 141.0h0M324.5 115.3h0M329.1 139.5h0M322.4 159.6h0M118.8 287.3h0M305.4 219.7h0M308.0 213.8h0M297.7 215.8h0M99.0 282.7h0M314.8 194.0h0M190.7 298.2h0M157.7 295.3h0M154.1 289.9h0M228.3 294.0h0M222.5 293.1h0M123.7 289.5h0M36.8 275.0h0M16.7 252.6h0M10.6 279.0h0M238.7 289.0h0M7.2 274.9h0M52.9 289.3h0M58.8 292.1h0M318.4 188.9h0M251.7 277.5h0M324.6 165.0h0M87.1 284.4h0M14.9 272.4h0M294.4 231.9h0M343.2 116.3h0M257.2 276.7h0M314.4 152.3h0M48.6 293.6h0M311.5 199.0h0M147.0 296.1h0M191.4 292.6h0M315.3 183.4h0M259.3 271.1h0M3.3 270.3h0M166.4 300.2h0M238.8 295.3h0M288.6 245.9h0M185.3 299.8h0M320.3 193.8h0M41.9 283.0h0M243.6 292.0h0M214.2 285.7h0M318.2 148.4h0M347.7 120.3h0M283.7 247.7h0M324.5 170.3h0M53.6 295.0h0M175.7 297.0h0M93.4 283.1h0M321.5 184.7h0M305.8 230.2h0M132.5 293.8h0M199.1 300.3h0M21.4 279.4h0M243.5 297.9h0M87.1 290.3h0M41.5 288.2h0M205.6 300.0h0M281.1 252.6h0M262.3 265.7h0M329.6 167.2h0M318.9 174.6h0M289.8 240.6h0M312.7 204.8h0M324.2 135.5h0M298.9 238.0h0M180.2 300.2h0M207.4 293.8h0M308.3 224.5h0M129.0 289.5h0M287.5 252.5h0M219.0 282.6h0M265.6 257.6h0M337.1 115.1h0M292.8 249.2h0M333.7 136.6h0M202.1 295.5h0M310.9 218.7h0M339.5 120.4h0M131.0 299.1h0M250.3 282.9h0M329.3 133.3h0M283.6 257.5h0M224.5 281.4h0M71.9 292.9h0M152.5 295.8h0M136.5 297.9h0M22.1 284.7h0M299.5 221.1h0M315.7 216.5h0M294.3 243.6h0M289.5 258.5h0M242.1 284.0h0M252.8 287.7h0M299.4 244.5h0M246.2 279.8h0M325.0 189.1h0M354.6 120.6h0M188.0 304.2h0M126.1 294.7h0M77.0 295.7h0M274.3 252.4h0M248.2 299.9h0M294.1 237.6h0M262.9 275.8h0M361.0 120.7h0M72.1 298.5h0M271.3 257.3h0M324.6 180.2h0M255.8 282.5h0M16.5 283.3h0M218.2 289.4h0M330.2 178.2h0M104.2 281.6h0M338.6 135.2h0M31.5 277.4h0M334.3 130.6h0M351.2 125.3h0M92.2 288.1h0M211.2 297.7h0M313.1 211.1h0M329.9 172.8h0M293.6 254.5h0M67.3 295.2h0M182.1 305.4h0M239.5 302.4h0M2.6 278.1h0M5.6 282.9h0M220.6 298.2h0M324.6 175.4h0M327.6 183.7h0M341.0 130.0h0M76.5 289.7h0M176.5 303.8h0M234.9 300.2h0M97.8 288.8h0M249.1 293.0h0M321.3 216.2h0M138.6 292.7h0M193.8 302.6h0M357.5 125.6h0M82.0 288.4h0M317.1 199.6h0M317.9 206.2h0M268.6 274.7h0M230.6 298.4h0M77.2 301.7h0M298.4 250.2h0M316.1 160.9h0M147.6 301.3h0M142.0 297.5h0M160.8 299.8h0M328.4 161.2h0M216.3 294.7h0M157.9 286.5h0M333.6 182.4h0M180.5 310.9h0M312.3 157.2h0M18.3 288.9h0M149.3 291.1h0M12.5 289.4h0M337.2 125.6h0M326.6 156.0h0M346.6 128.4h0M261.0 281.4h0M343.3 124.2h0M253.0 297.5h0M280.2 243.3h0M137.2 303.3h0M321.7 203.0h0M234.9 306.1h0M50.6 270.8h0M185.8 309.6h0M45.0 298.1h0M244.8 304.1h0M328.2 150.6h0M259.0 287.8h0M254.7 292.3h0M36.6 285.8h0M330.9 191.7h0M142.3 303.1h0M175.8 313.3h0M344.0 135.3h0M246.9 287.3h0M50.5 300.1h0M322.8 198.2h0M71.8 304.0h0M7.0 288.7h0M308.9 235.3h0M26.8 282.0h0M57.6 298.0h0M348.9 133.0h0M300.4 232.1h0M332.3 154.7h0M154.5 300.9h0M191.6 308.2h0M273.7 262.2h0M145.3 307.4h0M323.5 220.6h0M323.9 211.3h0M304.0 242.0h0M43.4 292.7h0M336.3 193.8h0M41.5 302.3h0M341.4 140.8h0M229.4 304.0h0M201.5 305.0h0M334.5 165.8h0M92.3 293.5h0M127.8 305.6h0M330.9 187.1h0M252.4 303.3h0M252.5 308.5h0M1.1 286.8h0M311.6 229.2h0M322.5 152.1h0M335.2 171.6h0M62.6 296.5h0M200.7 310.8h0M318.5 211.4h0M133.4 309.3h0M265.0 270.4h0M82.0 299.3h0M125.7 300.2h0M163.6 305.3h0M113.4 286.7h0M204.6 313.8h0M120.0 293.4h0M81.9 293.6h0M354.4 130.7h0M251.5 313.8h0M212.1 290.7h0M225.5 299.4h0M276.0 267.4h0M87.2 295.9h0M318.4 155.7h0M325.5 206.4h0M340.8 173.6h0M130.7 314.0h0M92.7 299.1h0M304.0 236.6h0M46.9 304.8h0M196.7 307.3h0M67.0 300.9h0M102.5 292.8h0M221.6 303.9h0M339.8 167.8h0M258.3 299.8h0M267.8 263.2h0M120.3 299.4h0M195.5 313.3h0M259.3 294.0h0M329.7 145.1h0M158.3 305.1h0M87.1 301.4h0M114.2 291.8h0M3.2 292.5h0M279.5 262.2h0M329.5 210.5h0M336.4 177.4h0M339.3 162.2h0M139.4 308.5h0M185.4 315.5h0M190.1 313.1h0M343.4 157.6h0M154.3 308.8h0M338.9 151.9h0M15.5 293.4h0M344.8 163.5h0M36.4 291.4h0M20.8 295.1h0M180.3 316.8h0M225.6 308.0h0M175.3 319.2h0M313.4 223.6h0M76.9 307.3h0M350.5 160.8h0M36.9 280.3h0M108.1 291.1h0M31.9 282.9h0M264.2 293.5h0M277.4 257.1h0M90.2 305.7h0M52.5 306.8h0M170.4 296.0h0M23.8 289.9h0M169.1 305.5h0M340.0 198.0h0M39.1 296.4h0M264.4 285.9h0M347.6 140.1h0M318.4 221.6h0M9.1 294.7h0M3.8 298.2h0M336.0 187.9h0M169.1 310.8h0M344.6 195.4h0M125.7 316.5h0M7.4 302.4h0M35.8 300.9h0M97.6 295.3h0M122.4 305.0h0M257.1 311.6h0M149.2 311.4h0M270.3 268.6h0M143.2 313.0h0M206.3 305.6h0M326.1 194.3h0M360.8 130.5h0M112.0 281.5h0M14.2 297.8h0M348.6 155.3h0M339.0 183.1h0M43.7 309.4h0M125.5 310.6h0M216.1 300.8h0M236.0 311.6h0M331.0 197.0h0M220.9 309.9h0M246.2 315.7h0M334.1 148.9h0M333.6 160.4h0M327.2 215.9h0M337.8 156.9h0M247.0 309.5h0M26.7 296.1h0M12.9 302.4h0M351.4 144.8h0M159.1 311.1h0M332.7 215.9h0M55.8 302.8h0M108.2 285.4h0M304.1 248.1h0M344.4 184.8h0M335.2 142.2h0M49.2 311.4h0M285.3 262.9h0M313.9 234.0h0M61.7 302.1h0M357.7 146.0h0M115.5 297.0h0M337.9 214.0h0M132.5 304.2h0M266.7 280.2h0M6.0 307.9h0M31.4 288.0h0M340.9 189.9h0M28.6 291.6h0M99.7 300.6h0M40.6 271.6h0M165.8 316.1h0M133.8 318.7h0M331.3 204.8h0M179.7 322.6h0M139.5 318.5h0M241.0 308.3h0M70.9 309.0h0M216.4 306.4h0M103.2 287.3h0M82.6 305.4h0M345.5 145.6h0M328.4 221.4h0M104.6 298.1h0M208.8 309.9h0M343.0 215.3h0M241.2 313.9h0M230.3 310.2h0M174.7 325.1h0M154.7 314.4h0M160.1 317.0h0M342.5 179.1h0M18.7 300.9h0M309.0 243.8h0M117.3 306.5h0M23.5 305.1h0M274.1 273.2h0M109.0 302.2h0M317.4 227.2h0M250.7 319.4h0M171.1 315.4h0M150.7 305.4h0M214.3 311.4h0M174.2 308.3h0M334.7 209.9h0M110.1 296.4h0M32.7 295.9h0M336.8 205.0h0M95.3 304.1h0M270.4 284.5h0M268.0 289.9h0M1.5 304.3h0M352.4 136.7h0M114.7 302.2h0M225.3 314.7h0M111.9 308.0h0M344.6 151.3h0M154.7 319.9h0M323.3 225.7h0M319.2 231.8h0M172.1 301.2h0M180.0 327.9h0M351.7 150.4h0M354.4 156.0h0M333.4 222.0h0M346.0 190.3h0M119.7 310.9h0M257.6 305.7h0M191.5 318.0h0M241.4 319.7h0M195.5 322.1h0M149.8 316.7h0M339.5 146.3h0M149.2 322.2h0M17.4 306.3h0M329.8 226.9h0M163.9 310.9h0M137.0 313.7h0M169.3 326.1h0M173.0 330.8h0M312.9 239.9h0M327.5 201.0h0M159.4 322.8h0M355.6 141.0h0M199.5 317.4h0M338.1 219.3h0M15.3 311.6h0M146.5 326.7h0M309.9 249.3h0M357.6 160.8h0M335.0 199.9h0M262.4 309.3h0M256.3 317.4h0M205.3 319.1h0M59.9 307.0h0M211.2 303.7h0M231.1 315.5h0M255.0 322.8h0M65.8 306.6h0M69.0 313.9h0M314.7 245.5h0M170.1 320.8h0M106.1 306.8h0M19.6 314.8h0M210.2 315.5h0M63.4 311.9h0M249.8 325.4h0M340.9 209.5h0M167.0 331.3h0M136.4 323.6h0M178.0 332.5h0M349.5 166.5h0M323.5 235.7h0M38.4 307.0h0M129.2 321.7h0M325.3 240.2h0M164.7 321.5h0M358.1 135.7h0M11.5 307.3h0M262.9 303.7h0M210.8 321.1h0M53.9 314.6h0M185.6 327.0h0M11.1 284.4h0M361.4 141.1h0M258.7 326.6h0M346.0 207.4h0M318.0 237.2h0M348.8 180.8h0M95.7 309.7h0M219.2 314.5h0M327.7 244.9h0M261.5 315.2h0M354.6 165.3h0M0.4 317.4h0M144.8 318.4h0M107.7 312.3h0M324.8 230.5h0M86.8 309.6h0M341.5 203.6h0M264.9 298.8h0M100.6 306.1h0M272.5 279.0h0M263.4 329.9h0M273.7 289.0h0M357.8 151.3h0M9.5 312.7h0M86.1 314.9h0M342.6 222.5h0M192.1 327.2h0M142.1 323.8h0M211.5 326.9h0M13.6 317.2h0M278.1 277.6h0M182.7 334.9h0M181.8 340.9h0M320.4 246.9h0M73.3 317.4h0M253.3 329.1h0M215.4 317.9h0M123.7 321.7h0M187.0 338.4h0M29.6 301.3h0M198.3 327.8h0M153.9 325.5h0M25.8 314.1h0M319.6 241.8h0M282.0 267.4h0M350.1 197.8h0M330.9 239.6h0M287.3 269.6h0M345.9 201.2h0M201.1 323.1h0M3.2 312.4h0M176.7 343.7h0M276.3 283.5h0M189.5 322.8h0M23.9 300.1h0M186.7 344.1h0M57.1 310.9h0M39.0 313.0h0M59.7 316.2h0M75.3 312.6h0M206.4 324.6h0M194.2 331.8h0M216.1 323.6h0M261.1 321.4h0M350.4 210.7h0M360.6 166.4h0M354.9 182.9h0M187.9 332.1h0M75.4 322.4h0M253.8 334.7h0M324.9 249.8h0M119.9 316.1h0M25.9 319.8h0M333.7 244.7h0M334.3 235.0h0M299.3 255.5h0M28.0 308.7h0M330.7 249.8h0M155.6 332.3h0M44.4 315.3h0M49.8 317.7h0M360.9 156.0h0M169.7 335.7h0M327.6 254.7h0M353.7 215.7h0M306.1 253.5h0M247.9 331.7h0M249.5 337.1h0M315.0 251.2h0M126.0 326.9h0M269.9 301.5h0M303.3 258.7h0M81.2 311.5h0M184.7 321.0h0M171.1 345.3h0M79.1 317.3h0M337.3 226.2h0M300.6 263.2h0M299.7 268.7h0M279.6 272.1h0M45.3 320.9h0M114.2 313.8h0M236.3 317.3h0M231.2 321.0h0M244.2 327.1h0M6.7 317.3h0M270.0 295.3h0M336.3 249.7h0M91.7 313.6h0M254.6 340.5h0M177.2 337.7h0M236.9 322.7h0M32.9 305.7h0M329.6 232.8h0M337.0 239.7h0M346.6 175.5h0M164.1 337.1h0M65.2 317.9h0M172.4 339.9h0M266.2 317.8h0M150.7 329.9h0M319.9 252.7h0M216.6 330.0h0M248.5 342.0h0M356.2 170.7h0M204.3 329.6h0M308.6 258.5h0M15.6 322.6h0M350.7 172.0h0M70.2 288.1h0M97.5 315.3h0M61.2 322.0h0M312.5 262.4h0M69.6 321.3h0M345.0 169.7h0M350.2 186.4h0M181.7 346.7h0M350.8 192.3h0M199.6 333.5h0M348.0 216.2h0M33.5 311.4h0M167.0 341.6h0M353.4 177.1h0M306.6 263.7h0M322.4 257.3h0M266.8 322.9h0M191.9 336.2h0M66.1 325.1h0M244.3 337.6h0M284.1 275.3h0M327.0 260.1h0M3.3 322.2h0M161.5 332.6h0M84.5 319.5h0M295.4 260.0h0M355.1 200.1h0M305.4 268.9h0M258.4 331.9h0M295.3 265.5h0M350.7 204.2h0M294.1 270.8h0M267.9 306.7h0M192.0 341.6h0M158.3 337.7h0M280.2 287.9h0M67.4 330.9h0M147.6 334.3h0M210.3 332.2h0M267.2 312.3h0M154.5 342.3h0M163.8 326.9h0M55.4 320.0h0M259.4 336.9h0M290.3 264.5h0M90.5 319.3h0M80.7 323.2h0M241.9 332.4h0M119.8 326.4h0M313.2 256.2h0M161.4 342.5h0M152.7 336.7h0M86.9 324.2h0M0.5 327.4h0M148.7 340.2h0M332.1 261.2h0M61.8 328.2h0M71.6 326.8h0M20.0 319.6h0M274.6 298.2h0M282.0 281.5h0M220.8 325.4h0M143.0 330.6h0M356.2 210.4h0M118.4 321.0h0M238.5 336.8h0M137.9 328.9h0M272.5 323.6h0M290.1 274.8h0M165.2 347.4h0M22.2 324.4h0M359.2 175.3h0M338.4 231.8h0M272.9 309.6h0M133.5 332.3h0M271.8 315.9h0M344.1 231.1h0M339.7 244.5h0M204.7 335.5h0M131.9 326.9h0M31.2 316.6h0M142.6 336.2h0M276.4 319.3h0M311.1 268.0h0M18.1 328.0h0M317.5 259.8h0M232.9 326.5h0M77.4 328.2h0M356.4 205.0h0M302.1 273.5h0M116.5 331.0h0M220.4 334.7h0M268.4 327.8h0M109.5 317.4h0M45.5 326.7h0M56.6 325.4h0M-0.9 332.9h0M9.7 322.1h0M229.2 330.2h0M361.6 207.0h0M295.8 276.1h0M317.0 266.0h0M50.6 323.5h0M277.2 292.9h0M158.2 346.8h0M12.6 327.2h0M262.0 341.4h0M226.3 323.7h0M197.2 344.4h0M275.3 304.0h0M315.3 271.7h0M52.1 328.7h0M347.1 226.0h0M20.6 332.5h0M10.3 331.7h0M279.5 307.4h0M281.7 316.7h0M360.5 214.1h0M221.6 319.7h0M285.8 285.9h0M214.9 336.2h0M301.2 278.3h0M113.5 321.4h0M21.9 310.0h0M238.7 327.8h0M268.5 333.2h0M143.2 341.3h0M302.0 283.4h0M209.7 337.7h0M30.9 322.6h0M241.4 342.3h0M112.2 326.9h0M322.2 263.3h0M360.5 180.8h0M107.8 322.5h0M308.4 273.7h0M277.4 313.1h0M347.9 236.4h0M73.3 332.3h0M267.7 342.4h0M26.8 326.9h0M101.8 311.4h0M271.4 338.5h0M322.0 269.0h0M196.8 338.4h0M62.8 334.0h0M276.5 342.2h0M246.1 346.8h0M6.5 327.1h0M103.5 317.0h0M243.7 352.7h0M350.2 221.1h0M187.0 349.9h0M192.4 352.5h0M355.7 194.8h0M280.0 297.2h0M201.6 340.7h0M128.4 332.2h0M361.0 199.0h0M355.6 188.9h0M280.8 338.4h0M313.1 277.3h0M213.2 342.5h0M122.7 331.6h0M81.2 332.6h0M77.1 336.3h0M360.9 192.7h0M273.5 330.6h0M307.2 279.4h0M166.3 353.4h0M285.4 297.3h0M360.8 186.5h0M247.6 357.2h0M4.8 332.7h0M188.1 355.9h0M272.0 345.6h0M339.3 254.3h0M176.5 349.6h0M27.3 332.7h0M285.0 291.6h0M249.4 351.3h0M43.6 331.7h0M354.4 224.7h0M182.1 352.3h0M92.2 325.2h0M282.0 302.1h0M182.6 357.9h0M240.9 347.6h0M283.5 311.3h0M57.9 336.7h0M350.1 231.1h0M49.8 333.2h0M264.2 346.4h0M327.4 265.8h0M277.4 326.4h0M234.9 332.3h0M281.3 322.7h0M177.4 355.2h0M235.4 340.9h0M151.6 347.3h0M46.0 336.9h0M290.8 290.0h0M125.9 337.1h0M146.6 345.4h0M175.9 360.7h0M171.0 363.1h0M282.2 344.3h0M161.0 352.0h0M360.7 225.2h0M170.9 350.4h0M296.2 281.7h0M342.1 249.1h0M-1.4 342.6h0M69.5 336.5h0M355.7 229.8h0M295.4 293.5h0M290.6 297.2h0M290.8 303.6h0M35.9 324.9h0M36.8 318.4h0M333.4 255.3h0M167.2 358.9h0M275.9 336.0h0M363.0 219.4h0M253.1 355.6h0M288.0 314.8h0M308.5 285.0h0M235.3 346.0h0M40.6 323.0h0M284.7 333.9h0M32.0 329.1h0M258.6 355.4h0M255.9 350.3h0M285.5 305.8h0M192.0 347.0h0M354.7 235.5h0M265.3 337.0h0M122.6 341.7h0M295.2 300.0h0M180.9 363.4h0M172.0 356.0h0M278.2 348.3h0M287.7 280.0h0M14.9 334.6h0M325.4 273.5h0M113.9 336.0h0M137.8 340.9h0M291.7 319.2h0M284.9 349.6h0M361.0 231.5h0M119.9 336.2h0M291.4 284.3h0M337.4 259.9h0M237.4 351.4h0M261.8 351.0h0M9.1 337.1h0M232.0 350.6h0M357.4 219.8h0M320.0 274.6h0M156.3 356.4h0M303.1 288.2h0M219.1 340.4h0M2.8 338.2h0M342.8 258.6h0M155.2 351.2h0M296.9 287.6h0M37.7 330.6h0M267.8 350.7h0M289.3 309.5h0M7.1 342.5h0M252.8 361.6h0M102.0 322.7h0M273.1 350.9h0M245.8 321.8h0M23.3 337.0h0M258.2 345.1h0M264.8 356.0h0M318.8 279.7h0M2.9 346.3h0M279.3 331.8h0M13.0 341.6h0M39.8 336.1h0M313.1 288.7h0M283.7 328.3h0M110.0 331.9h0M308.3 291.2h0M242.6 360.3h0M226.1 334.5h0M277.4 354.3h0M225.3 339.5h0M231.2 336.9h0M294.2 310.9h0M206.5 341.7h0M270.8 356.3h0M145.2 350.6h0M131.9 338.0h0M223.4 329.7h0M227.5 348.3h0M230.0 343.0h0M361.1 237.5h0M117.0 340.8h0M307.8 296.9h0M223.4 344.5h0M296.3 305.8h0M333.4 266.7h0M158.6 328.1h0M96.2 320.5h0M325.4 279.1h0M37.8 341.2h0M18.1 339.3h0M10.8 347.1h0M299.9 297.1h0M252.2 346.1h0M186.9 361.9h0M258.7 360.8h0M57.2 331.3h0M88.9 329.7h0M105.9 327.7h0M32.8 341.4h0M97.4 325.9h0M287.6 324.6h0M264.3 361.7h0M83.4 328.1h0M338.5 265.5h0M28.4 338.5h0M290.0 329.5h0M43.1 341.4h0M341.9 236.7h0M293.0 324.5h0M150.0 353.3h0M150.3 358.8h0M286.1 319.8h0M160.0 364.1h0M208.5 346.4h0M124.1 347.4h0M161.8 358.1h0M197.6 349.9h0M45.6 347.1h0M144.5 356.5h0M314.4 283.2h0M192.7 360.1h0M64.4 339.4h0M297.8 321.4h0M128.1 342.9h0M316.2 293.3h0M17.5 345.7h0M330.0 270.8h0M269.6 363.7h0M100.5 329.8h0M198.9 361.1h0M218.0 346.2h0M247.2 363.2h0M33.4 335.1h0M133.3 343.8h0M322.5 283.7h0M74.1 340.8h0M222.5 350.4h0M108.2 337.6h0M331.1 281.9h0M118.5 345.9h0M155.0 361.9h0M40.6 346.6h0M288.1 345.0h0M111.9 341.5h0M94.5 331.1h0M50.9 347.0h0M217.4 352.2h0M335.8 279.1h0M52.8 338.4h0M59.8 342.1h0M291.1 339.9h0M140.7 346.4h0M348.9 257.2h0M103.0 339.8h0M300.7 302.2h0M345.2 241.9h0M301.9 317.6h0M324.1 289.0h0M227.5 354.7h0M290.4 334.8h0M213.1 348.9h0M335.7 272.4h0M343.9 265.7h0M87.5 334.7h0M112.7 346.9h0M221.7 356.2h0M119.2 351.3h0M296.1 337.5h0M236.8 361.5h0M145.7 362.3h0M341.6 270.8h0M22.8 342.7h0M197.0 355.7h0M35.2 346.6h0M79.9 341.9h0M321.6 293.2h0M285.9 339.7h0M13.6 352.0h0M239.2 356.2h0M233.5 356.0h0M9.3 356.0h0M6.2 350.9h0M301.8 336.7h0M295.6 332.1h0M296.0 316.2h0M38.0 351.8h0M303.0 293.4h0M69.0 342.5h0M24.0 348.3h0M274.7 360.7h0M330.8 276.2h0M82.8 337.7h0M76.9 346.2h0M351.9 240.9h0M19.5 351.4h0M345.3 253.1h0M280.1 359.1h0M357.9 242.3h0M359.4 247.9h0M328.9 291.8h0M87.5 340.4h0M140.5 363.6h0M353.6 246.7h0M71.4 347.3h0M28.2 344.5h0M139.9 352.5h0M302.1 307.4h0M202.5 353.0h0M30.8 349.5h0M12.8 361.0h0M17.0 356.7h0M331.9 296.2h0M104.4 333.7h0M138.3 358.1h0M22.9 357.5h0M351.2 252.0h0M347.6 247.2h0M346.9 261.8h0M297.5 327.0h0M299.1 342.3h0M107.1 344.1h0M356.8 252.9h0M225.2 361.0h0M305.0 312.8h0M135.8 348.5h0M283.4 355.0h0M305.9 302.1h0M129.9 348.9h0M202.8 346.9h0M311.3 303.1h0M18.9 362.3h0M116.3 356.3h0M203.8 358.6h0M285.1 361.9h0M337.7 296.5h0M67.2 350.7h0M48.8 341.9h0M43.6 353.0h0M98.8 335.4h0M27.7 364.4h0M27.0 353.3h0M306.7 320.2h0M208.2 352.1h0M93.0 337.0h0M219.0 361.6h0M106.8 349.9h0M207.1 363.5h0M84.7 345.3h0M301.5 330.7h0M33.3 354.9h0M137.5 335.2h0M328.4 301.2h0M134.8 363.7h0M209.4 357.7h0M34.7 361.0h0M333.9 301.4h0M112.5 352.3h0M97.5 341.2h0M335.7 307.1h0M54.5 351.1h0M340.3 276.2h0M3.0 355.9h0M215.1 357.1h0M311.9 321.1h0M294.0 344.2h0M125.5 352.8h0M350.9 264.8h0M213.0 362.7h0M330.3 306.3h0M230.8 360.8h0M354.2 258.2h0M112.5 359.8h0M318.2 321.5h0M133.8 353.7h0M102.8 354.5h0M307.5 307.7h0M302.6 324.6h0M313.6 298.0h0M343.2 281.1h0M310.0 314.4h0M39.7 357.5h0M28.9 358.8h0M299.6 312.2h0M108.1 356.0h0M51.4 357.0h0M95.5 346.9h0M291.4 349.6h0M324.0 319.2h0M347.8 270.0h0M-0.8 351.2h0M41.3 363.2h0M363.5 252.2h0M323.3 324.3h0M48.8 352.1h0M55.2 344.2h0M101.5 346.0h0M64.4 345.6h0M328.0 285.8h0M356.7 263.3h0M338.3 284.5h0M62.6 354.1h0M59.6 348.6h0M126.8 358.4h0M343.0 293.7h0M117.4 363.2h0M339.2 302.3h0M57.3 355.8h0M107.4 362.2h0M290.4 359.4h0M360.3 257.5h0M68.3 356.3h0M288.9 354.2h0M6.0 361.1h0M45.8 359.0h0M102.0 360.6h0M338.2 290.5h0M308.0 326.3h0M343.6 287.6h0M319.7 298.4h0M307.4 337.6h0M333.3 287.8h0M81.6 350.0h0M316.9 303.3h0M49.8 363.9h0M346.2 275.7h0M348.1 283.6h0M91.9 342.9h0M319.4 327.5h0M75.1 351.5h0M354.3 269.0h0M312.6 336.7h0M326.7 328.5h0M316.4 332.1h0M318.2 337.5h0M306.4 332.4h0M312.6 308.6h0M97.5 357.0h0M314.8 316.8h0M311.3 330.9h0M61.2 360.2h0M309.9 342.5h0M92.7 353.3h0M343.7 299.8h0M295.1 362.3h0M362.9 262.5h0M89.6 348.4h0M123.0 363.0h0M296.9 349.0h0M79.5 355.2h0M323.1 303.1h0M322.1 332.7h0M96.5 363.2h0M311.1 347.5h0M341.1 307.7h0M320.0 315.7h0M128.8 364.1h0M55.3 361.4h0M351.5 279.4h0M92.2 359.2h0M358.5 273.5h0M348.1 296.1h0M66.6 361.9h0M316.5 311.7h0M98.4 351.2h0M360.2 267.8h0M121.4 357.1h0M325.7 296.8h0M74.1 357.2h0M304.5 342.4h0M314.1 326.0h0M315.0 342.3h0M302.2 347.3h0M352.2 274.1h0M352.6 293.5h0M86.6 353.8h0M320.1 308.0h0M324.8 313.4h0M327.4 334.1h0M132.2 358.8h0M312.8 352.9h0M337.9 312.6h0M306.6 350.6h0M316.7 348.2h0M318.6 287.8h0M87.6 361.7h0M349.2 301.8h0M323.3 338.7h0M332.1 311.9h0M357.6 279.2h0M325.6 308.4h0M332.2 330.7h0M329.3 316.7h0M72.2 362.4h0M357.4 289.8h0M300.9 353.1h0M294.9 354.9h0M-0.2 360.9h0M334.5 318.2h0M78.2 362.1h0M311.2 358.6h0M328.7 322.5h0M299.6 358.8h0M357.5 295.9h0M362.6 293.6h0M333.3 324.9h0M349.8 288.8h0M320.0 343.5h0M340.1 317.6h0M337.6 329.0h0M338.4 322.9h0M354.7 284.6h0M332.7 336.6h0M337.9 335.1h0M306.0 356.0h0M362.7 282.4h0M361.1 300.7h0M321.7 350.6h0M344.0 312.9h0M363.3 288.0h0M344.6 320.1h0M353.1 306.2h0M304.7 361.5h0M322.3 356.8h0M83.2 358.8h0M349.8 310.9h0M316.9 356.6h0M348.7 316.3h0M343.1 325.5h0M326.6 353.8h0M325.4 361.6h0M355.6 311.7h0M361.3 313.3h0M343.3 336.5h0M359.1 306.5h0M328.1 339.6h0M354.8 300.7h0M349.8 322.1h0M313.7 363.9h0M324.9 344.8h0M346.3 306.5h0M330.8 343.5h0M332.2 352.9h0M354.0 317.7h0M336.0 341.3h0M339.5 346.5h0M334.2 347.4h0M330.0 358.6h0M319.4 362.3h0M359.4 318.7h0M328.4 348.7h0M337.6 352.1h0M335.4 357.8h0M343.2 351.4h0M363.3 323.6h0M348.0 328.0h0M347.8 333.6h0M345.0 345.8h0M346.6 356.4h0M347.5 340.2h0M340.8 356.8h0M347.7 362.3h0M353.7 341.5h0M357.7 323.7h0M341.5 341.2h0M358.9 342.8h0M342.7 331.1h0M350.1 345.4h0M352.2 336.7h0M348.8 350.9h0M336.3 363.8h0M357.7 335.1h0M353.4 326.1h0M359.2 329.3h0M355.1 347.5h0M354.0 353.0h0M353.3 331.3h0M357.7 357.2h0M342.0 362.3h0M360.9 348.0h0M361.9 353.3h0M362.0 338.5h0M361.2 361.6h0M352.2 358.8h0M355.4 364.2h0" stroke="#0a0a0a" stroke-width="3.9" stroke-linecap="round" fill="none"/></g></svg>

<!-- right panels -->
<div class="a" id="strip"></div>
<div class="a" id="panel"></div>
<div class="a" id="striphead"></div>
<svg class="a" style="left:637px;top:7px" width="7" height="4" viewBox="0 0 10 7"><path d="M4 0L0.5 3.5L4 7zM9 0L5.5 3.5L9 7z" fill="#d0d0d0"/></svg>
<div class="ib" style="top:12.5px;height:32.5px"><i class="grip" style="top:2.5px"></i><svg class="a" style="left:7.6px;top:10.9px" width="15" height="16" viewBox="0 0 14 15"><rect x="0.5" y="0.5" width="13" height="13" fill="none" stroke="#b4b4b4" stroke-dasharray="1 1"/><path d="M3 11V7l1.5-2.500l1.500 2.500l1 0l1.500-2.500l1.500 2.500l1 0v4z" fill="#d4d4d4"/></svg></div><div class="ib" style="top:45.0px;height:33.5px"><i class="grip" style="top:3.3px"></i><svg class="a" style="left:7.6px;top:11.2px" width="15" height="16" viewBox="0 0 14 15"><rect x="0" y="0" width="4" height="3" fill="none" stroke="#ddd"/><rect x="0" y="5" width="4" height="3" fill="#ddd"/><rect x="0" y="10" width="4" height="3" fill="#ddd"/><path d="M7 3c4 0 5 4 3 9" fill="none" stroke="#ddd" stroke-width="1.6"/><path d="M6 3l4-3v5z" fill="#ddd"/></svg></div><div class="ib" style="top:78.5px;height:33.5px"><i class="grip" style="top:2.0px"></i><svg class="a" style="left:7.6px;top:10.3px" width="15" height="16" viewBox="0 0 14 15"><rect x="0.5" y="0.5" width="13" height="13" fill="none" stroke="#b4b4b4" stroke-dasharray="1 1"/><path d="M3 11V7l1.5-2.500l1.500 2.500l1 0l1.500-2.500l1.500 2.500l1 0v4z" fill="#d4d4d4"/></svg></div><div class="ib" style="top:112.0px;height:32.5px"><i class="grip" style="top:1.6px"></i><svg class="a" style="left:7.6px;top:11.0px" width="15" height="16" viewBox="0 0 14 15"><g transform="translate(2.4,0)"><path d="M9 0L3 6.6l3 1l-4 7.4l8-8.400l-3-1l4-5.600z" fill="#d4d4d4"/></g></svg></div><div class="ib" style="top:144.5px;height:32.5px"><i class="grip" style="top:2.3px"></i><svg class="a" style="left:7.6px;top:10.9px" width="15" height="16" viewBox="0 0 14 15"><path d="M6.4 0.6v6M2 2.4l3 4.6M11 2.4l-3 4.6" stroke="#ddd" stroke-width="1.8" stroke-linecap="round" fill="none"/><path d="M3 7.4h7v7h-7z" fill="#e0e0e0"/></svg></div><div class="a" style="left:617px;top:177px;width:31px;height:303px;background:#3a3a3a"></div>
<div class="a" id="ptabs"><i class="a" style="left:41px;top:0;width:25px;height:12px;background:#4e4e4e"></i><span class="t" style="left:6px;top:2px;font-size:8px;color:#ddd">图层</span><span class="t" style="left:23px;top:2px;font-size:8px;color:#8a8a8a">字符</span><span class="t" style="left:46px;top:2px;font-size:8px;color:#fff">通道</span><span class="t" style="left:73px;top:2px;font-size:8px;color:#b0b0b0">路径</span><span class="t" style="left:95px;top:2px;font-size:8px;color:#b0b0b0">样式</span><span class="t" style="left:116px;top:2px;font-size:8px;color:#b0b0b0">历史</span><span class="t" style="left:134px;top:2px;font-size:8px;color:#b0b0b0">动作</span></div>
<div class="row" style="top:27.6px;height:30.7px"><i class="eye"></i><svg class="th" width="24" height="24" viewBox="0 0 24 24" style="top:2.8px"><rect width="24" height="24" fill="#e8512a"/></svg><span class="t" style="font-size:10px;transform:scaleX(.8);transform-origin:0 0;top:10.4px">RGB</span></div><div class="row" style="top:57.3px;height:30.7px"><i class="eye"></i><svg class="th" width="24" height="24" viewBox="0 0 24 24" style="top:2.7px"><rect width="24" height="24" fill="#ececec"/></svg><span class="t">红</span></div><div class="row" style="top:86.9px;height:30.7px"><i class="eye"></i><svg class="th" width="24" height="24" viewBox="0 0 24 24" style="top:1.8px"><rect width="24" height="24" fill="#767676"/><rect x="0" y="0" width="2" height="2" fill="#6b6b6b"/><rect x="2" y="0" width="2" height="2" fill="#7f7f7f"/><rect x="4" y="0" width="2" height="2" fill="#7d7d7d"/><rect x="6" y="0" width="2" height="2" fill="#6f6f6f"/><rect x="8" y="0" width="2" height="2" fill="#757575"/><rect x="10" y="0" width="2" height="2" fill="#747474"/><rect x="12" y="0" width="2" height="2" fill="#7a7a7a"/><rect x="14" y="0" width="2" height="2" fill="#7e7e7e"/><rect x="16" y="0" width="2" height="2" fill="#6a6a6a"/><rect x="18" y="0" width="2" height="2" fill="#686868"/><rect x="20" y="0" width="2" height="2" fill="#7f7f7f"/><rect x="22" y="0" width="2" height="2" fill="#747474"/><rect x="0" y="2" width="2" height="2" fill="#7d7d7d"/><rect x="2" y="2" width="2" height="2" fill="#686868"/><rect x="4" y="2" width="2" height="2" fill="#747474"/><rect x="6" y="2" width="2" height="2" fill="#7c7c7c"/><rect x="8" y="2" width="2" height="2" fill="#6e6e6e"/><rect x="10" y="2" width="2" height="2" fill="#828282"/><rect x="12" y="2" width="2" height="2" fill="#818181"/><rect x="14" y="2" width="2" height="2" fill="#686868"/><rect x="16" y="2" width="2" height="2" fill="#686868"/><rect x="18" y="2" width="2" height="2" fill="#777777"/><rect x="20" y="2" width="2" height="2" fill="#828282"/><rect x="22" y="2" width="2" height="2" fill="#727272"/><rect x="0" y="4" width="2" height="2" fill="#6e6e6e"/><rect x="2" y="4" width="2" height="2" fill="#737373"/><rect x="4" y="4" width="2" height="2" fill="#686868"/><rect x="6" y="4" width="2" height="2" fill="#6e6e6e"/><rect x="8" y="4" width="2" height="2" fill="#747474"/><rect x="10" y="4" width="2" height="2" fill="#757575"/><rect x="12" y="4" width="2" height="2" fill="#6e6e6e"/><rect x="14" y="4" width="2" height="2" fill="#6e6e6e"/><rect x="16" y="4" width="2" height="2" fill="#6e6e6e"/><rect x="18" y="4" width="2" height="2" fill="#747474"/><rect x="20" y="4" width="2" height="2" fill="#707070"/><rect x="22" y="4" width="2" height="2" fill="#686868"/><rect x="0" y="6" width="2" height="2" fill="#7f7f7f"/><rect x="2" y="6" width="2" height="2" fill="#777777"/><rect x="4" y="6" width="2" height="2" fill="#797979"/><rect x="6" y="6" width="2" height="2" fill="#6d6d6d"/><rect x="8" y="6" width="2" height="2" fill="#838383"/><rect x="10" y="6" width="2" height="2" fill="#808080"/><rect x="12" y="6" width="2" height="2" fill="#6b6b6b"/><rect x="14" y="6" width="2" height="2" fill="#717171"/><rect x="16" y="6" width="2" height="2" fill="#7c7c7c"/><rect x="18" y="6" width="2" height="2" fill="#7b7b7b"/><rect x="20" y="6" width="2" height="2" fill="#828282"/><rect x="22" y="6" width="2" height="2" fill="#737373"/><rect x="0" y="8" width="2" height="2" fill="#7f7f7f"/><rect x="2" y="8" width="2" height="2" fill="#7a7a7a"/><rect x="4" y="8" width="2" height="2" fill="#707070"/><rect x="6" y="8" width="2" height="2" fill="#787878"/><rect x="8" y="8" width="2" height="2" fill="#808080"/><rect x="10" y="8" width="2" height="2" fill="#7f7f7f"/><rect x="12" y="8" width="2" height="2" fill="#767676"/><rect x="14" y="8" width="2" height="2" fill="#787878"/><rect x="16" y="8" width="2" height="2" fill="#686868"/><rect x="18" y="8" width="2" height="2" fill="#6e6e6e"/><rect x="20" y="8" width="2" height="2" fill="#7e7e7e"/><rect x="22" y="8" width="2" height="2" fill="#737373"/><rect x="0" y="10" width="2" height="2" fill="#6c6c6c"/><rect x="2" y="10" width="2" height="2" fill="#777777"/><rect x="4" y="10" width="2" height="2" fill="#7b7b7b"/><rect x="6" y="10" width="2" height="2" fill="#7a7a7a"/><rect x="8" y="10" width="2" height="2" fill="#727272"/><rect x="10" y="10" width="2" height="2" fill="#747474"/><rect x="12" y="10" width="2" height="2" fill="#767676"/><rect x="14" y="10" width="2" height="2" fill="#7d7d7d"/><rect x="16" y="10" width="2" height="2" fill="#767676"/><rect x="18" y="10" width="2" height="2" fill="#737373"/><rect x="20" y="10" width="2" height="2" fill="#757575"/><rect x="22" y="10" width="2" height="2" fill="#686868"/><rect x="0" y="12" width="2" height="2" fill="#696969"/><rect x="2" y="12" width="2" height="2" fill="#7b7b7b"/><rect x="4" y="12" width="2" height="2" fill="#838383"/><rect x="6" y="12" width="2" height="2" fill="#787878"/><rect x="8" y="12" width="2" height="2" fill="#737373"/><rect x="10" y="12" width="2" height="2" fill="#6c6c6c"/><rect x="12" y="12" width="2" height="2" fill="#767676"/><rect x="14" y="12" width="2" height="2" fill="#838383"/><rect x="16" y="12" width="2" height="2" fill="#7d7d7d"/><rect x="18" y="12" width="2" height="2" fill="#777777"/><rect x="20" y="12" width="2" height="2" fill="#808080"/><rect x="22" y="12" width="2" height="2" fill="#6e6e6e"/><rect x="0" y="14" width="2" height="2" fill="#767676"/><rect x="2" y="14" width="2" height="2" fill="#828282"/><rect x="4" y="14" width="2" height="2" fill="#787878"/><rect x="6" y="14" width="2" height="2" fill="#747474"/><rect x="8" y="14" width="2" height="2" fill="#6f6f6f"/><rect x="10" y="14" width="2" height="2" fill="#777777"/><rect x="12" y="14" width="2" height="2" fill="#828282"/><rect x="14" y="14" width="2" height="2" fill="#686868"/><rect x="16" y="14" width="2" height="2" fill="#7d7d7d"/><rect x="18" y="14" width="2" height="2" fill="#7e7e7e"/><rect x="20" y="14" width="2" height="2" fill="#808080"/><rect x="22" y="14" width="2" height="2" fill="#7c7c7c"/><rect x="0" y="16" width="2" height="2" fill="#7e7e7e"/><rect x="2" y="16" width="2" height="2" fill="#767676"/><rect x="4" y="16" width="2" height="2" fill="#777777"/><rect x="6" y="16" width="2" height="2" fill="#737373"/><rect x="8" y="16" width="2" height="2" fill="#696969"/><rect x="10" y="16" width="2" height="2" fill="#808080"/><rect x="12" y="16" width="2" height="2" fill="#777777"/><rect x="14" y="16" width="2" height="2" fill="#6d6d6d"/><rect x="16" y="16" width="2" height="2" fill="#767676"/><rect x="18" y="16" width="2" height="2" fill="#757575"/><rect x="20" y="16" width="2" height="2" fill="#717171"/><rect x="22" y="16" width="2" height="2" fill="#717171"/><rect x="0" y="18" width="2" height="2" fill="#777777"/><rect x="2" y="18" width="2" height="2" fill="#797979"/><rect x="4" y="18" width="2" height="2" fill="#797979"/><rect x="6" y="18" width="2" height="2" fill="#747474"/><rect x="8" y="18" width="2" height="2" fill="#686868"/><rect x="10" y="18" width="2" height="2" fill="#6e6e6e"/><rect x="12" y="18" width="2" height="2" fill="#6c6c6c"/><rect x="14" y="18" width="2" height="2" fill="#787878"/><rect x="16" y="18" width="2" height="2" fill="#808080"/><rect x="18" y="18" width="2" height="2" fill="#7e7e7e"/><rect x="20" y="18" width="2" height="2" fill="#7e7e7e"/><rect x="22" y="18" width="2" height="2" fill="#7e7e7e"/><rect x="0" y="20" width="2" height="2" fill="#6f6f6f"/><rect x="2" y="20" width="2" height="2" fill="#7f7f7f"/><rect x="4" y="20" width="2" height="2" fill="#7a7a7a"/><rect x="6" y="20" width="2" height="2" fill="#6a6a6a"/><rect x="8" y="20" width="2" height="2" fill="#686868"/><rect x="10" y="20" width="2" height="2" fill="#686868"/><rect x="12" y="20" width="2" height="2" fill="#7d7d7d"/><rect x="14" y="20" width="2" height="2" fill="#6e6e6e"/><rect x="16" y="20" width="2" height="2" fill="#6b6b6b"/><rect x="18" y="20" width="2" height="2" fill="#797979"/><rect x="20" y="20" width="2" height="2" fill="#717171"/><rect x="22" y="20" width="2" height="2" fill="#696969"/><rect x="0" y="22" width="2" height="2" fill="#6c6c6c"/><rect x="2" y="22" width="2" height="2" fill="#767676"/><rect x="4" y="22" width="2" height="2" fill="#6c6c6c"/><rect x="6" y="22" width="2" height="2" fill="#6f6f6f"/><rect x="8" y="22" width="2" height="2" fill="#7b7b7b"/><rect x="10" y="22" width="2" height="2" fill="#747474"/><rect x="12" y="22" width="2" height="2" fill="#717171"/><rect x="14" y="22" width="2" height="2" fill="#757575"/><rect x="16" y="22" width="2" height="2" fill="#686868"/><rect x="18" y="22" width="2" height="2" fill="#727272"/><rect x="20" y="22" width="2" height="2" fill="#737373"/><rect x="22" y="22" width="2" height="2" fill="#6d6d6d"/></svg><span class="t">绿</span></div><div class="row" style="top:116.6px;height:30.7px"><i class="eye"></i><svg class="th" width="24" height="24" viewBox="0 0 24 24" style="top:1.9px"><rect width="24" height="24" fill="#3c3c3c"/><rect x="0" y="0" width="2" height="2" fill="#454545"/><rect x="2" y="0" width="2" height="2" fill="#444444"/><rect x="4" y="0" width="2" height="2" fill="#333333"/><rect x="6" y="0" width="2" height="2" fill="#333333"/><rect x="8" y="0" width="2" height="2" fill="#424242"/><rect x="10" y="0" width="2" height="2" fill="#404040"/><rect x="12" y="0" width="2" height="2" fill="#3f3f3f"/><rect x="14" y="0" width="2" height="2" fill="#383838"/><rect x="16" y="0" width="2" height="2" fill="#3e3e3e"/><rect x="18" y="0" width="2" height="2" fill="#3e3e3e"/><rect x="20" y="0" width="2" height="2" fill="#3d3d3d"/><rect x="22" y="0" width="2" height="2" fill="#353535"/><rect x="0" y="2" width="2" height="2" fill="#3a3a3a"/><rect x="2" y="2" width="2" height="2" fill="#393939"/><rect x="4" y="2" width="2" height="2" fill="#404040"/><rect x="6" y="2" width="2" height="2" fill="#454545"/><rect x="8" y="2" width="2" height="2" fill="#444444"/><rect x="10" y="2" width="2" height="2" fill="#3c3c3c"/><rect x="12" y="2" width="2" height="2" fill="#3a3a3a"/><rect x="14" y="2" width="2" height="2" fill="#373737"/><rect x="16" y="2" width="2" height="2" fill="#323232"/><rect x="18" y="2" width="2" height="2" fill="#323232"/><rect x="20" y="2" width="2" height="2" fill="#3b3b3b"/><rect x="22" y="2" width="2" height="2" fill="#383838"/><rect x="0" y="4" width="2" height="2" fill="#393939"/><rect x="2" y="4" width="2" height="2" fill="#434343"/><rect x="4" y="4" width="2" height="2" fill="#3c3c3c"/><rect x="6" y="4" width="2" height="2" fill="#3d3d3d"/><rect x="8" y="4" width="2" height="2" fill="#363636"/><rect x="10" y="4" width="2" height="2" fill="#323232"/><rect x="12" y="4" width="2" height="2" fill="#383838"/><rect x="14" y="4" width="2" height="2" fill="#343434"/><rect x="16" y="4" width="2" height="2" fill="#3c3c3c"/><rect x="18" y="4" width="2" height="2" fill="#454545"/><rect x="20" y="4" width="2" height="2" fill="#3f3f3f"/><rect x="22" y="4" width="2" height="2" fill="#353535"/><rect x="0" y="6" width="2" height="2" fill="#434343"/><rect x="2" y="6" width="2" height="2" fill="#414141"/><rect x="4" y="6" width="2" height="2" fill="#404040"/><rect x="6" y="6" width="2" height="2" fill="#444444"/><rect x="8" y="6" width="2" height="2" fill="#414141"/><rect x="10" y="6" width="2" height="2" fill="#414141"/><rect x="12" y="6" width="2" height="2" fill="#393939"/><rect x="14" y="6" width="2" height="2" fill="#454545"/><rect x="16" y="6" width="2" height="2" fill="#454545"/><rect x="18" y="6" width="2" height="2" fill="#353535"/><rect x="20" y="6" width="2" height="2" fill="#414141"/><rect x="22" y="6" width="2" height="2" fill="#404040"/><rect x="0" y="8" width="2" height="2" fill="#3b3b3b"/><rect x="2" y="8" width="2" height="2" fill="#3c3c3c"/><rect x="4" y="8" width="2" height="2" fill="#3b3b3b"/><rect x="6" y="8" width="2" height="2" fill="#444444"/><rect x="8" y="8" width="2" height="2" fill="#3c3c3c"/><rect x="10" y="8" width="2" height="2" fill="#424242"/><rect x="12" y="8" width="2" height="2" fill="#393939"/><rect x="14" y="8" width="2" height="2" fill="#434343"/><rect x="16" y="8" width="2" height="2" fill="#434343"/><rect x="18" y="8" width="2" height="2" fill="#3b3b3b"/><rect x="20" y="8" width="2" height="2" fill="#3d3d3d"/><rect x="22" y="8" width="2" height="2" fill="#444444"/><rect x="0" y="10" width="2" height="2" fill="#404040"/><rect x="2" y="10" width="2" height="2" fill="#3b3b3b"/><rect x="4" y="10" width="2" height="2" fill="#363636"/><rect x="6" y="10" width="2" height="2" fill="#383838"/><rect x="8" y="10" width="2" height="2" fill="#3f3f3f"/><rect x="10" y="10" width="2" height="2" fill="#353535"/><rect x="12" y="10" width="2" height="2" fill="#444444"/><rect x="14" y="10" width="2" height="2" fill="#373737"/><rect x="16" y="10" width="2" height="2" fill="#444444"/><rect x="18" y="10" width="2" height="2" fill="#383838"/><rect x="20" y="10" width="2" height="2" fill="#454545"/><rect x="22" y="10" width="2" height="2" fill="#404040"/><rect x="0" y="12" width="2" height="2" fill="#3c3c3c"/><rect x="2" y="12" width="2" height="2" fill="#3c3c3c"/><rect x="4" y="12" width="2" height="2" fill="#3f3f3f"/><rect x="6" y="12" width="2" height="2" fill="#3d3d3d"/><rect x="8" y="12" width="2" height="2" fill="#383838"/><rect x="10" y="12" width="2" height="2" fill="#363636"/><rect x="12" y="12" width="2" height="2" fill="#3c3c3c"/><rect x="14" y="12" width="2" height="2" fill="#444444"/><rect x="16" y="12" width="2" height="2" fill="#3e3e3e"/><rect x="18" y="12" width="2" height="2" fill="#333333"/><rect x="20" y="12" width="2" height="2" fill="#424242"/><rect x="22" y="12" width="2" height="2" fill="#404040"/><rect x="0" y="14" width="2" height="2" fill="#444444"/><rect x="2" y="14" width="2" height="2" fill="#353535"/><rect x="4" y="14" width="2" height="2" fill="#404040"/><rect x="6" y="14" width="2" height="2" fill="#333333"/><rect x="8" y="14" width="2" height="2" fill="#3f3f3f"/><rect x="10" y="14" width="2" height="2" fill="#373737"/><rect x="12" y="14" width="2" height="2" fill="#363636"/><rect x="14" y="14" width="2" height="2" fill="#434343"/><rect x="16" y="14" width="2" height="2" fill="#343434"/><rect x="18" y="14" width="2" height="2" fill="#3c3c3c"/><rect x="20" y="14" width="2" height="2" fill="#434343"/><rect x="22" y="14" width="2" height="2" fill="#363636"/><rect x="0" y="16" width="2" height="2" fill="#363636"/><rect x="2" y="16" width="2" height="2" fill="#434343"/><rect x="4" y="16" width="2" height="2" fill="#3a3a3a"/><rect x="6" y="16" width="2" height="2" fill="#404040"/><rect x="8" y="16" width="2" height="2" fill="#323232"/><rect x="10" y="16" width="2" height="2" fill="#393939"/><rect x="12" y="16" width="2" height="2" fill="#353535"/><rect x="14" y="16" width="2" height="2" fill="#3f3f3f"/><rect x="16" y="16" width="2" height="2" fill="#333333"/><rect x="18" y="16" width="2" height="2" fill="#454545"/><rect x="20" y="16" width="2" height="2" fill="#323232"/><rect x="22" y="16" width="2" height="2" fill="#404040"/><rect x="0" y="18" width="2" height="2" fill="#323232"/><rect x="2" y="18" width="2" height="2" fill="#373737"/><rect x="4" y="18" width="2" height="2" fill="#424242"/><rect x="6" y="18" width="2" height="2" fill="#353535"/><rect x="8" y="18" width="2" height="2" fill="#353535"/><rect x="10" y="18" width="2" height="2" fill="#3f3f3f"/><rect x="12" y="18" width="2" height="2" fill="#393939"/><rect x="14" y="18" width="2" height="2" fill="#323232"/><rect x="16" y="18" width="2" height="2" fill="#454545"/><rect x="18" y="18" width="2" height="2" fill="#353535"/><rect x="20" y="18" width="2" height="2" fill="#323232"/><rect x="22" y="18" width="2" height="2" fill="#383838"/><rect x="0" y="20" width="2" height="2" fill="#3e3e3e"/><rect x="2" y="20" width="2" height="2" fill="#404040"/><rect x="4" y="20" width="2" height="2" fill="#343434"/><rect x="6" y="20" width="2" height="2" fill="#383838"/><rect x="8" y="20" width="2" height="2" fill="#323232"/><rect x="10" y="20" width="2" height="2" fill="#3a3a3a"/><rect x="12" y="20" width="2" height="2" fill="#414141"/><rect x="14" y="20" width="2" height="2" fill="#404040"/><rect x="16" y="20" width="2" height="2" fill="#444444"/><rect x="18" y="20" width="2" height="2" fill="#414141"/><rect x="20" y="20" width="2" height="2" fill="#434343"/><rect x="22" y="20" width="2" height="2" fill="#404040"/><rect x="0" y="22" width="2" height="2" fill="#3b3b3b"/><rect x="2" y="22" width="2" height="2" fill="#363636"/><rect x="4" y="22" width="2" height="2" fill="#3f3f3f"/><rect x="6" y="22" width="2" height="2" fill="#383838"/><rect x="8" y="22" width="2" height="2" fill="#343434"/><rect x="10" y="22" width="2" height="2" fill="#3a3a3a"/><rect x="12" y="22" width="2" height="2" fill="#434343"/><rect x="14" y="22" width="2" height="2" fill="#343434"/><rect x="16" y="22" width="2" height="2" fill="#3d3d3d"/><rect x="18" y="22" width="2" height="2" fill="#393939"/><rect x="20" y="22" width="2" height="2" fill="#3c3c3c"/><rect x="22" y="22" width="2" height="2" fill="#343434"/></svg><span class="t">蓝</span></div><div class="row sel" style="top:146.2px;height:29.8px"><svg class="a" style="left:4px;top:11px" width="11" height="7" viewBox="0 0 13 10" preserveAspectRatio="none"><path d="M0.5 5C3 0.5 10 0.5 12.5 5C10 9.5 3 9.5 0.5 5z" fill="#e8eef5"/><circle cx="6.5" cy="5" r="2.6" fill="#3c4d63"/></svg><svg class="th" width="24" height="24" viewBox="0 0 24 24" style="top:2.8px"><rect width="24" height="24" fill="#f2f2f2"/><path d="M14.9 17.8h0M19.1 22.6h0M17.8 22.1h0M0.7 11.2h0M22.6 15.6h0M21.6 2.7h0M11.3 5.9h0M13.1 13.8h0M0.3 5.2h0M6.7 22.0h0M18.4 3.8h0M19.1 3.3h0M14.8 3.0h0M0.0 20.9h0M5.0 5.2h0M23.6 20.9h0M6.9 23.1h0M12.9 16.3h0M4.9 22.6h0M16.6 23.2h0M21.4 7.2h0M8.7 4.0h0M3.5 1.6h0M7.2 14.5h0M0.1 16.3h0M8.1 7.4h0M19.6 11.5h0M7.6 11.5h0M16.9 1.4h0M23.4 0.5h0M18.0 20.3h0M0.4 18.9h0M8.8 13.9h0M0.2 1.1h0M4.3 22.9h0M4.7 18.1h0M22.3 22.6h0M8.3 8.5h0M12.6 18.6h0M2.6 18.0h0M19.1 20.6h0M0.9 22.7h0M2.2 8.2h0M14.7 22.0h0M8.2 22.2h0M13.1 7.5h0M7.6 4.3h0M1.9 3.6h0M16.5 23.9h0M3.9 1.2h0M23.7 12.8h0M9.7 5.7h0M14.3 19.8h0M10.9 10.1h0M1.3 22.0h0M0.8 11.8h0M20.1 3.1h0M17.6 22.8h0M15.1 18.9h0M2.6 10.4h0M3.6 20.3h0M7.1 10.9h0M24.0 20.5h0M23.4 10.9h0M11.7 17.5h0M11.5 7.0h0M9.7 3.5h0M9.0 23.7h0M23.0 15.0h0M12.0 8.1h0" stroke="#222" stroke-width="1.3" stroke-linecap="round"/></svg><span class="t">绿 拷贝</span></div>

<!-- dialog -->
<!-- shadow -->
<div class="a" style="left:332px;top:185px;width:342px;height:310px;border-radius:7px;box-shadow:0 1px 7px 2px rgba(0,0,0,.62)"></div>
<svg class="a" style="left:330.6px;top:183.6px" width="344" height="297" viewBox="0 0 344 297">
<defs>
<linearGradient id="tb" x1="0" x2="1" y1="0" y2="0">
<stop offset="0" stop-color="#c6c6c6"/><stop offset="0.27" stop-color="#c2c2c2"/><stop offset="0.30" stop-color="#929292"/><stop offset="0.33" stop-color="#585858"/><stop offset="0.37" stop-color="#303030"/><stop offset="0.45" stop-color="#242424"/><stop offset="0.58" stop-color="#2c2c2c"/><stop offset="0.64" stop-color="#444"/><stop offset="0.70" stop-color="#5e5e5e"/><stop offset="0.80" stop-color="#646464"/><stop offset="0.88" stop-color="#565656"/><stop offset="1" stop-color="#5c5c5c"/>
</linearGradient>
<linearGradient id="tbv" x1="0" x2="0" y1="0" y2="1"><stop offset="0" stop-color="#fff" stop-opacity=".3"/><stop offset="0.012" stop-color="#fff" stop-opacity=".05"/><stop offset="0.045" stop-color="#fff" stop-opacity="0"/><stop offset="0.06" stop-color="#fff" stop-opacity=".08"/><stop offset="0.075" stop-color="#fff" stop-opacity=".36"/><stop offset="1" stop-color="#fff" stop-opacity=".3"/></linearGradient>
<linearGradient id="lb" x1="0" x2="0" y1="0" y2="1"><stop offset="0" stop-color="#bdbdbd"/><stop offset="0.975" stop-color="#b4b4b4"/><stop offset="0.985" stop-color="#3c3c3c"/><stop offset="1" stop-color="#333"/></linearGradient>
<linearGradient id="cl" x1="0" x2="0" y1="0" y2="1"><stop offset="0" stop-color="#eeb3a6"/><stop offset="0.45" stop-color="#d9604a"/><stop offset="0.5" stop-color="#c9391f"/><stop offset="1" stop-color="#d4532f"/></linearGradient>
<linearGradient id="rb" x1="0" x2="1" y1="0" y2="0"><stop offset="0" stop-color="#d4d4d4"/><stop offset="0.5" stop-color="#bcbcbc"/><stop offset="1" stop-color="#8c8c8c"/></linearGradient>
<linearGradient id="rl" x1="0" x2="1" y1="0" y2="0"><stop offset="0" stop-color="#fff" stop-opacity="0"/><stop offset="0.6" stop-color="#fff" stop-opacity=".38"/><stop offset="1" stop-color="#fff" stop-opacity=".38"/></linearGradient>
<linearGradient id="lbh" x1="0" x2="1" y1="0" y2="0"><stop offset="0" stop-color="#000" stop-opacity=".32"/><stop offset="0.55" stop-color="#000" stop-opacity=".22"/><stop offset="0.7" stop-color="#fff" stop-opacity=".25"/><stop offset="1" stop-color="#fff" stop-opacity=".5"/></linearGradient>
<linearGradient id="rb2" x1="0" x2="1" y1="0" y2="0"><stop offset="0" stop-color="#777"/><stop offset="0.6" stop-color="#6c6c6c"/><stop offset="0.8" stop-color="#8a8a8a"/><stop offset="1" stop-color="#666"/></linearGradient>
</defs>
<path d="M0 296V7a7 7 0 0 1 7-7H337a7 7 0 0 1 7 7V296z" fill="url(#tb)"/>
<path d="M0 296V7a7 7 0 0 1 7-7H337a7 7 0 0 1 7 7V296z" fill="url(#tbv)"/>
<rect x="0" y="22" width="6" height="275" fill="url(#lb)"/><rect x="0" y="22" width="6" height="268" fill="url(#lbh)"/>
<rect x="337" y="22" width="7" height="275" fill="url(#rb)"/><rect x="338" y="91" width="6" height="206" fill="url(#rb2)"/>
<path d="M0.5 296V7a6.5 6.5 0 0 1 6.500-6.500H337a6.500 6.500 0 0 1 6.500 6.500V296" fill="none" stroke="#2a2a2a" stroke-opacity=".8"/>
<path d="M1.500 296V7.500a6 6 0 0 1 6-6H336.500a6 6 0 0 1 6 6V296" fill="none" stroke="#fff" stroke-opacity=".55"/>
<rect x="270" y="15" width="67" height="7" fill="url(#rl)"/>
<!-- close -->
<path d="M300 1H336a1 1 0 0 1 1 1V12a3 3 0 0 1-3 3H303a3 3 0 0 1-3-3z" fill="url(#cl)" stroke="#5a1a10" stroke-opacity=".7"/>
<path d="M317.2 4.4l6.4 6.4M323.6 4.4l-6.400 6.4" stroke="#fff" stroke-width="2.2"/>
<text x="6.500" y="15" font-size="10" fill="#1a1a2c" font-family="Liberation Sans, Noto Sans CJK SC, sans-serif">色阶</text>
</svg>
<div class="a" id="cli"></div>
<!-- preset -->
<span class="dt" style="left:345px;top:220px">预设(<u>E</u>):</span>
<div class="inp" style="left:389px;top:215px;width:163px;height:17px;padding-top:5px;border-color:#f8f8f8;border-top-color:#c0c0c0">自定</div>
<svg class="a" style="left:542.300px;top:222.700px" width="7" height="4"><path d="M0 0h6.800l-3.400 3.600z" fill="#111"/></svg>
<svg class="a" style="left:558px;top:217px" width="16" height="13" viewBox="0 0 16 13"><g transform="translate(5.900,6) scale(0.74)"><circle r="3.300" fill="none" stroke="#2a2a2a" stroke-width="2.400"/><path d="M0-5.500V5.500M-5.500 0H5.500M-3.900-3.900L3.900 3.900M-3.900 3.900L3.900-3.900" stroke="#2a2a2a" stroke-width="2"/><circle r="1.600" fill="#f6f6f6"/></g><rect x="12" y="7.500" width="1.800" height="1.800" fill="#333"/></svg>
<!-- group -->
<div class="a" style="left:345px;top:254px;width:226px;height:219px;border:1px solid #d4d4d4;box-shadow:inset 1px 1px 0 #fcfcfc,1px 1px 0 #fcfcfc"></div>
<div class="a" style="left:366px;top:246px;width:140px;height:20px;background:#f0f0f0"></div>
<span class="dt" style="left:374px;top:253px">通道(<u>C</u>):</span>
<div class="inp" style="left:414px;top:247px;width:90px;height:18px;padding-top:6px;border-color:#f8f8f8;border-top-color:#c0c0c0">绿 拷贝</div>
<svg class="a" style="left:493.700px;top:256px" width="7" height="4"><path d="M0 0h6.800l-3.400 3.200z" fill="#111"/></svg>
<span class="dt" style="left:352px;top:275px">输入色阶(<u>I</u>):</span>
<!-- histogram -->
<div class="a" style="left:356px;top:289px;width:207px;height:82px;background:#fafafa;border:1px solid #dcdcdc"></div>
<svg class="a" style="left:356px;top:289px" width="207" height="82" viewBox="356 289 207 82"><path d="M365.0 369.6L370.0 369.0L372.0 367.4L373.8 360.0L375.6 351.0L377.5 341.0L379.5 328.0L381.5 318.0L383.4 311.6L385.0 310.2L386.6 312.0L388.0 320.0L389.7 332.0L391.0 339.0L392.5 345.0L395.0 349.4L398.0 351.2L403.8 352.2L408.0 351.6L411.3 349.7L413.2 346.0L415.0 341.3L417.4 330.0L419.7 318.8L422.0 309.0L424.4 300.0L426.4 293.4L428.1 289.7L429.8 293.0L431.9 300.0L433.8 311.0L435.6 322.5L437.5 331.0L439.4 338.4L442.0 342.2L445.0 345.0L448.0 348.0L450.6 350.8L452.0 355.0L453.5 359.0L455.2 362.2L457.2 364.7L459.4 366.8L461.9 368.4L465.0 369.2L471.0 369.6L471.0 370.0L365.0 370.0z" fill="#1c1c1c"/></svg>
<!-- sliders -->
<svg class="a" style="left:399px;top:370px" width="11" height="10" viewBox="0 0 11 10"><path d="M5.4 0.6L9.9 5.2V8H0.9V5.2z" fill="#6a6a6a" stroke="#8a8a8a"/></svg>
<svg class="a" style="left:476px;top:370px" width="11" height="10" viewBox="0 0 11 10"><path d="M5.4 0.6L9.9 5.2V8H0.9V5.2z" fill="#dcdcdc" stroke="#8a8a8a"/></svg>
<div class="inp" style="left:353px;top:384px;width:35px;height:15px">59</div>
<div class="inp" style="left:442px;top:384px;width:35px;border-color:#3c9bd9;padding:2px 0 0 2px"><span style="display:inline-block;background:#3d8fe0;color:#fff;padding:0 1px;height:11px;line-height:11px">9.99</span></div>
<div class="inp" style="left:531px;top:384px;width:35px;height:15px">155</div>
<div class="a" style="left:352px;top:407px;width:214px;height:2px;background:#dadada;border-bottom:1px solid #fcfcfc"></div>
<span class="dt" style="left:352px;top:414px">输出色阶(<u>O</u>):</span>
<div class="a" style="left:357px;top:428px;width:205px;height:10px;background:linear-gradient(90deg,#000,#fff)"></div>
<svg class="a" style="left:352px;top:438px" width="11" height="10" viewBox="0 0 11 10"><path d="M5.4 0.6L9.9 5.2V8H0.9V5.2z" fill="#222" stroke="#555"/></svg>
<svg class="a" style="left:557px;top:438px" width="11" height="10" viewBox="0 0 11 10"><path d="M5.4 0.6L9.9 5.2V8H0.9V5.2z" fill="#dcdcdc" stroke="#8a8a8a"/></svg>
<div class="inp" style="left:353px;top:453px;width:35px;height:15px">0</div>
<div class="inp" style="left:531px;top:453px;width:35px;height:15px">255</div>
<!-- buttons -->
<div class="btn def" style="top:216px">确定</div>
<div class="btn" style="top:238px">复位</div>
<div class="btn" style="top:266px">自动(<u>A</u>)</div>
<div class="btn" style="top:294px">选项(<u>T</u>)...</div>
<!-- eyedroppers -->
<svg class="a" style="left:594.5px;top:323px" width="60" height="16" viewBox="0 0 60 16"><g transform="scale(.9)"><path d="M1 15l1-3l6-6l2 2l-6 6z" fill="#1e1e1e"/><path d="M7 4l5 5l1.400-1.400l-1-1l2-2.600a1.800 1.800 0 0 0-2.600-2.600l-2.400 2l-1-1z" fill="#1e1e1e"/></g><g transform="translate(20.6,0) scale(.9)" opacity=".3"><path d="M1 15l1-3l6-6l2 2l-6 6z" fill="#1e1e1e"/><path d="M7 4l5 5l1.400-1.400l-1-1l2-2.600a1.800 1.800 0 0 0-2.600-2.600l-2.400 2l-1-1z" fill="#1e1e1e"/></g><g transform="translate(41.400,0) scale(.9)"><path d="M1 15l1-3l6-6l2 2l-6 6z" fill="#fff" stroke="#1e1e1e" stroke-width=".9"/><path d="M7 4l5 5l1.400-1.400l-1-1l2-2.600a1.800 1.800 0 0 0-2.600-2.600l-2.400 2l-1-1z" fill="#1e1e1e"/></g></svg>
<!-- checkbox -->
<div class="a" style="left:585px;top:351.5px;width:10px;height:10px;background:#e2e6ee;border:1px solid #a3acc0"></div>
<svg class="a" style="left:586px;top:352.500px" width="9" height="8" viewBox="0 0 9 8"><path d="M1.500 3.500L3.500 6L7.500 1" fill="none" stroke="#33406a" stroke-width="1.500"/></svg>
<span class="dt" style="left:598px;top:353px">预览(<u>P</u>)</span>


<!-- watermark -->
<svg class="a" style="left:660px;top:380px" width="140" height="100" viewBox="0 0 140 100">
<polygon points="8.500,58 140,29 140,100 1,100" fill="#fcfcfc"/>
<polygon points="4.400,100 140,29.500 140,100" fill="#3dabe6"/>
<text x="79" y="73.500" font-family="Liberation Mono, monospace" font-size="12.400" fill="#eaf7ff">jb51.net</text>
<text x="45.500" y="97" font-family="Liberation Sans, Noto Sans CJK SC, sans-serif" font-weight="400" font-size="24" fill="#eaf7ff">脚本之家</text>
</svg>
</body></html>
